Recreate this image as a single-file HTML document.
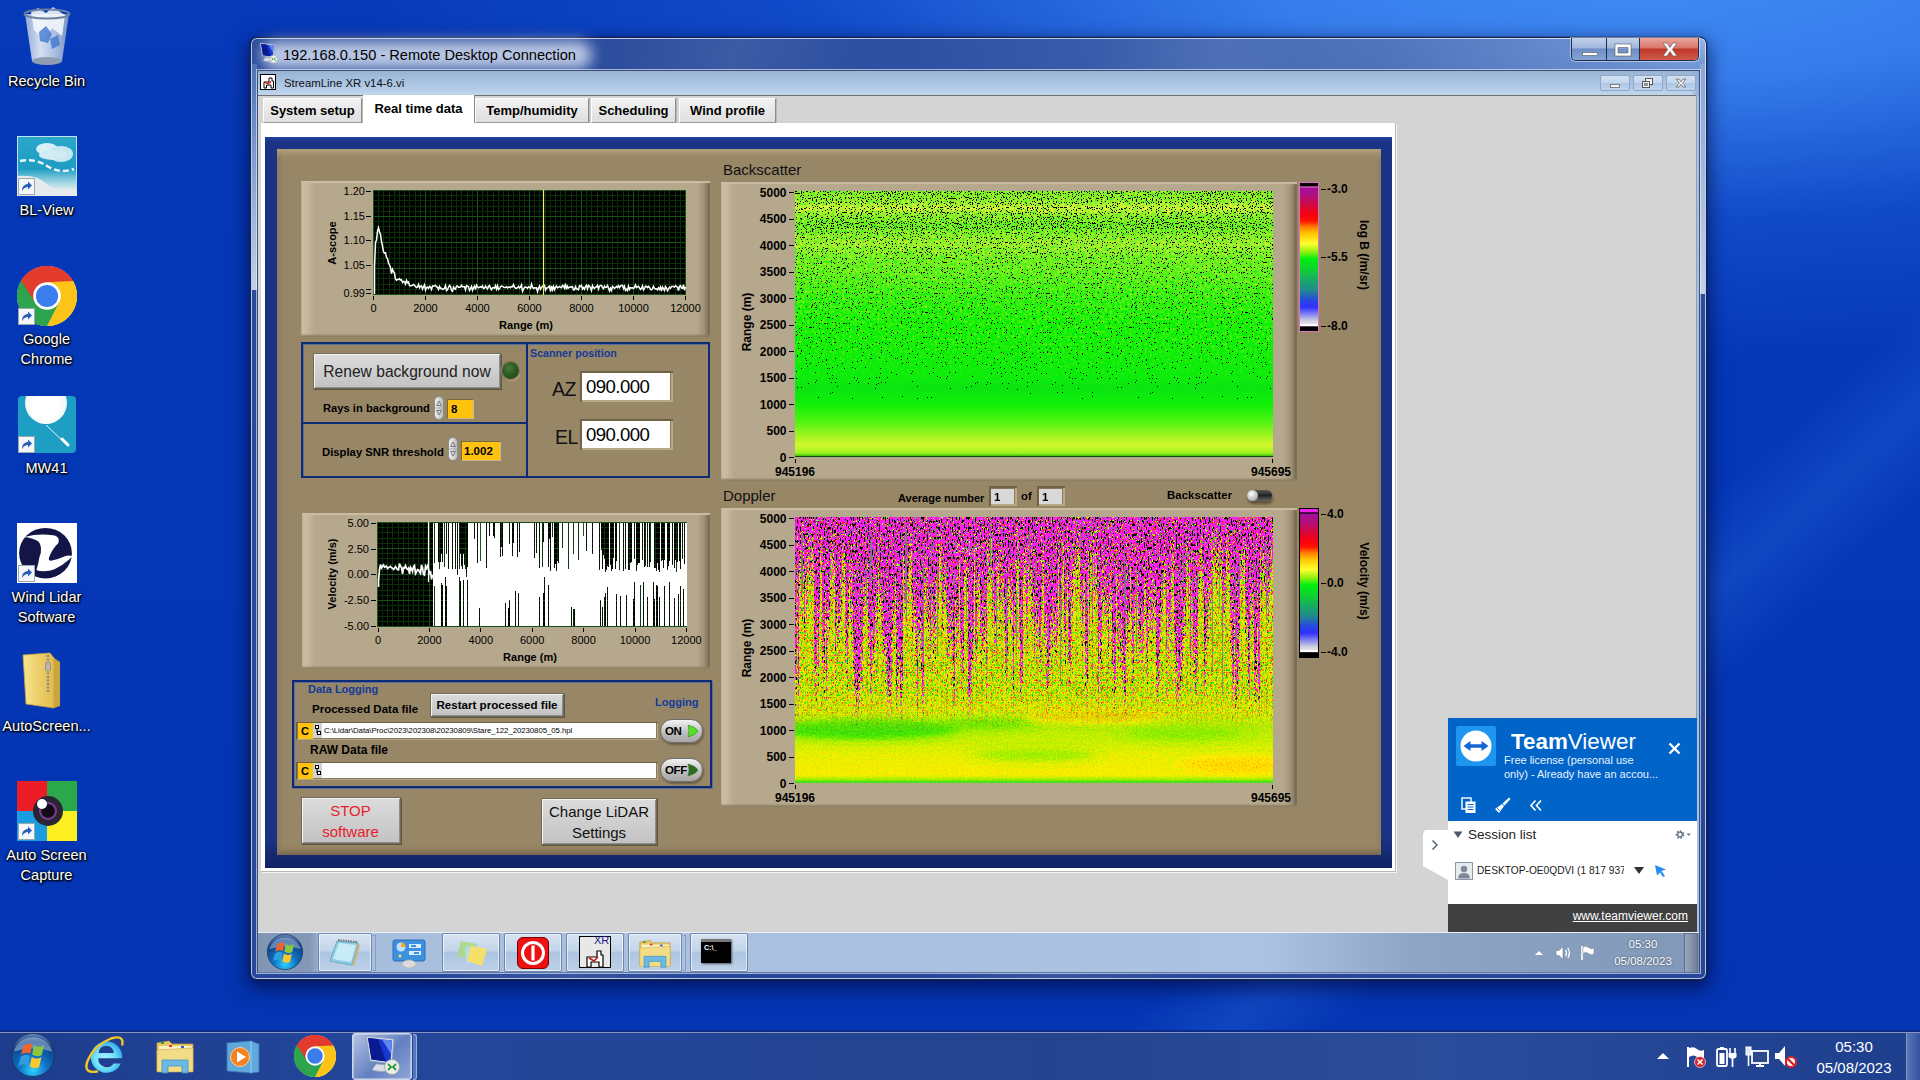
<!DOCTYPE html><html><head><meta charset="utf-8"><title>Desktop</title><style>
html,body{margin:0;padding:0}
body{width:1920px;height:1080px;overflow:hidden;position:relative;font-family:"Liberation Sans", "DejaVu Sans", sans-serif;
background:#0438b8;}
div{position:absolute;box-sizing:border-box}
svg{position:absolute;overflow:visible}
.t{white-space:nowrap;line-height:1.15}
.dl{color:#fff;text-shadow:0 1px 2px #000,0 0 3px #000,1px 1px 2px #000;font-size:14.6px;text-align:center;white-space:nowrap;line-height:20px}
.btn{background:linear-gradient(#dcdcdc,#c2c2c2);border:1px solid #6f6a5c;box-shadow:inset 1px 1px 0 #f4f4f4,inset -1px -1px 0 #8d8d8d,1px 1px 0 #5f563f;text-align:center}
.pnl{background:linear-gradient(to right,#cdc0a6 0px,#c7b99e 6px,#b6a88c 13px,#b6a88c calc(100% - 13px),#a09275 calc(100% - 6px),#80735a calc(100% - 2px),#62563f 100%);box-shadow:inset 0 2px 1px #cabda3,inset 0 -2px 2px #8d7f62}
.ax{font-size:11px;color:#000;white-space:nowrap;line-height:12px}
.axb{font-size:11px;font-weight:bold;color:#000;white-space:nowrap;line-height:12px}
</style></head><body>
<div style="left:0;top:0;width:1920px;height:1080px;background:radial-gradient(ellipse 1300px 400px at 1640px -40px, rgba(66,142,246,1) 0%, rgba(58,130,240,.92) 30%, rgba(28,92,216,.5) 65%, rgba(4,56,184,0) 100%),linear-gradient(138deg, rgba(60,130,240,0) 72.500%, rgba(60,130,240,.22) 76%, rgba(60,130,240,0) 79.500%),linear-gradient(to bottom,#0639b9 0%,#0437b6 40%,#0434b2 100%)"></div>
<svg style="left:22px;top:6px" width="50" height="62" viewBox="0 0 50 62"><defs><linearGradient id="rb" x1="0" x2="1"><stop offset="0" stop-color="#9fb4d6"/><stop offset=".35" stop-color="#e8eef8"/><stop offset=".7" stop-color="#b7c7e2"/><stop offset="1" stop-color="#7f96c0"/></linearGradient></defs><path d="M3 8 L47 8 L40 55 Q25 61 10 55 Z" fill="url(#rb)" opacity=".92"/><path d="M9 6 L16 2 L24 7 L31 1 L38 6 L43 9 L40 30 L30 22 L22 34 L12 24 Z" fill="#f2f5fb" opacity=".9"/><path d="M17 26 l7 -6 6 8 -4 9 -8 -2z M28 33 l8 -4 2 10 -8 4z" fill="#3f78d0" opacity=".8"/><ellipse cx="25" cy="8" rx="22.5" ry="4.5" fill="none" stroke="#6c7f9f" stroke-width="2"/><ellipse cx="25" cy="55" rx="15" ry="4" fill="#8e9cb4"/></svg>
<div class="dl" style="left:0;top:71px;width:93px">Recycle Bin</div>
<div style="left:17px;top:136px;width:60px;height:60px;background:linear-gradient(#2aa7c9 0%,#1e9cc2 55%,#8fd0e0 75%,#e8ecee 92%);border:1px solid #bfe3ee"></div>
<svg style="left:17px;top:136px" width="60" height="60" viewBox="0 0 60 60"><ellipse cx="30" cy="13" rx="11" ry="6" fill="#d9eff6"/><ellipse cx="44" cy="18" rx="12" ry="8" fill="#c6e7f1"/><ellipse cx="36" cy="19" rx="14" ry="5" fill="#d2ecf4"/><path d="M3 25 Q18 22 30 30 T57 33" stroke="#e8f6fa" stroke-width="2.4" stroke-dasharray="6 3" fill="none"/><path d="M0 40 Q20 38 30 48 T60 54 L60 60 L0 60Z" fill="#e6eaec"/></svg>
<svg style="left:18px;top:178px" width="17" height="17" viewBox="0 0 17 17"><rect x="0.5" y="0.5" width="16" height="16" fill="#f4f6fa" stroke="#9aa"/><path d="M4 13 C4 8 7 6 10 6 L10 3.5 L14 7.5 L10 11.5 L10 9 C7.5 9 6 10 4 13Z" fill="#2b5fb8"/></svg>
<div class="dl" style="left:0;top:200px;width:93px">BL-View</div>
<svg style="left:17px;top:266px" width="60" height="60" viewBox="-50 -50 100 100"><circle r="50" fill="#fff"/><path d="M0 0 L-43.3 -25 A50 50 0 0 1 43.3 -25 Z" fill="#e33b2e"/><path d="M0 0 L43.3 -25 A50 50 0 0 1 0 50 Z" fill="#fcc419"/><path d="M0 0 L0 50 A50 50 0 0 1 -43.3 -25 Z" fill="#2da44e"/><path d="M0 -23 L43.3 -25 A50 50 0 0 0 -43.3 -25 L-20 11 Z" fill="#e33b2e"/><path d="M20 11 L0 50 A50 50 0 0 0 43.3 -25 L0 -23 Z" fill="#fcc419"/><path d="M-20 11 L-43.3 -25 A50 50 0 0 0 0 50 L20 11 Z" fill="#2da44e"/><circle r="23" fill="#fff"/><circle r="18.5" fill="#3b7ded"/></svg>
<svg style="left:18px;top:308px" width="17" height="17" viewBox="0 0 17 17"><rect x="0.5" y="0.5" width="16" height="16" fill="#f4f6fa" stroke="#9aa"/><path d="M4 13 C4 8 7 6 10 6 L10 3.5 L14 7.5 L10 11.5 L10 9 C7.5 9 6 10 4 13Z" fill="#2b5fb8"/></svg>
<div class="dl" style="left:0;top:329px;width:93px">Google<br>Chrome</div>
<div style="left:18px;top:396px;width:58px;height:57px;border-radius:4px;background:#1f9ec4;overflow:hidden"><div style="left:7px;top:-14px;width:42px;height:42px;border-radius:50%;background:radial-gradient(circle at 50% 60%,#fff 40%,#d8e6ea 100%)"></div><svg width="58" height="57" viewBox="0 0 58 57"><path d="M28 29 L46 46" stroke="#e8f4f8" stroke-width="1"/><path d="M44 43 L50 49" stroke="#fff" stroke-width="3" stroke-linecap="round"/></svg></div>
<svg style="left:18px;top:436px" width="17" height="17" viewBox="0 0 17 17"><rect x="0.5" y="0.5" width="16" height="16" fill="#f4f6fa" stroke="#9aa"/><path d="M4 13 C4 8 7 6 10 6 L10 3.5 L14 7.5 L10 11.5 L10 9 C7.5 9 6 10 4 13Z" fill="#2b5fb8"/></svg>
<div class="dl" style="left:0;top:458px;width:93px">MW41</div>
<div style="left:17px;top:523px;width:60px;height:60px;background:#fff;overflow:hidden"><svg width="60" height="60" viewBox="0 0 60 60"><ellipse cx="28.500" cy="30.200" rx="26.400" ry="25.300" fill="#131547"/><path d="M7.300 13.900 Q22 10 36.100 12.200 Q41 13 41.700 16.300 Q42 19 41 20.500 Q35 26 31.900 35.100 Q31.500 38 34 37.800 Q42 36 48.600 33 Q52 32 55.500 33.200 Q53.500 35 52.100 36.500 Q45 43 37.500 46.200 Q32 48.500 26.400 48.300 Q22 48 19.400 46.900 Q21.500 41 22.200 35.100 Q24.500 29 24 24.700 Q23.500 20.500 21.500 18.400 Q15 14.500 7.300 13.900Z" fill="#fff"/></svg></div>
<svg style="left:18px;top:565px" width="17" height="17" viewBox="0 0 17 17"><rect x="0.5" y="0.5" width="16" height="16" fill="#f4f6fa" stroke="#9aa"/><path d="M4 13 C4 8 7 6 10 6 L10 3.5 L14 7.5 L10 11.5 L10 9 C7.5 9 6 10 4 13Z" fill="#2b5fb8"/></svg>
<div class="dl" style="left:0;top:587px;width:93px">Wind Lidar<br>Software</div>
<svg style="left:20px;top:652px" width="46" height="58" viewBox="0 0 46 58"><defs><linearGradient id="zf" x1="0" x2="1"><stop offset="0" stop-color="#f7e38d"/><stop offset="1" stop-color="#e2bb4a"/></linearGradient></defs><path d="M3 3 L30 1 L34 6 L34 56 L6 52 Z" fill="url(#zf)" stroke="#c9a53f" stroke-width=".8"/><path d="M34 6 L40 10 L40 54 L34 56Z" fill="#c9a53f"/><path d="M28 3 V40" stroke="#8c8c8c" stroke-width="2.5" stroke-dasharray="2 1.5"/><rect x="25.5" y="10" width="5" height="9" rx="2" fill="#b5b5b5" stroke="#777" stroke-width=".6"/></svg>
<div class="dl" style="left:0;top:716px;width:93px">AutoScreen...</div>
<div style="left:17px;top:781px;width:60px;height:60px;background:conic-gradient(#2aa84a 0 25%,#fdee21 0 50%,#1b9be0 0 75%,#ec1c24 0)"></div>
<div style="left:33px;top:796px;width:30px;height:30px;border-radius:50%;background:radial-gradient(circle at 50% 50%,#120a18 0 30%,#7a3a8a 34% 40%,#2b2433 44% 70%,#1b3f8f 74% 100%)"></div><div style="left:37px;top:799px;width:10px;height:10px;border-radius:50%;background:#fff"></div>
<svg style="left:18px;top:823px" width="17" height="17" viewBox="0 0 17 17"><rect x="0.5" y="0.5" width="16" height="16" fill="#f4f6fa" stroke="#9aa"/><path d="M4 13 C4 8 7 6 10 6 L10 3.5 L14 7.5 L10 11.5 L10 9 C7.5 9 6 10 4 13Z" fill="#2b5fb8"/></svg>
<div class="dl" style="left:0;top:845px;width:93px">Auto Screen<br>Capture</div>
<div style="left:0;top:1032px;width:1920px;height:48px;background:linear-gradient(to right,#1d3c8c 0%,#24469a 20%,#24448f 55%,#2b4c9a 75%,#1e3f8e 100%);border-top:1px solid #8696c4;box-shadow:0 -2px 0 #0b2c86"></div>
<svg style="left:11px;top:1033px" width="44" height="44" viewBox="-50 -50 100 100"><defs><radialGradient id="og33" cx=".5" cy=".85" r=".9"><stop offset="0" stop-color="#2fd2ff"/><stop offset=".35" stop-color="#1173c4"/><stop offset=".75" stop-color="#0d3f86"/><stop offset="1" stop-color="#86a6cc"/></radialGradient></defs><circle r="49" fill="url(#og33)" stroke="#1b355f" stroke-width="2"/><path d="M-44 -8 A46 46 0 0 1 44 -8 Q0 -22 -44 -8Z" fill="#fff" opacity=".35"/><path d="M-22 -20 Q-10 -30 -2 -24 L-6 -3 Q-16 -8 -27 -1Z" fill="#f0642a"/><path d="M2 -22 Q12 -14 25 -22 L20 0 Q10 6 -2 -1Z" fill="#8cc63f"/><path d="M-28 4 Q-16 -4 -7 2 L-11 24 Q-22 18 -33 25Z" fill="#2f9de0"/><path d="M-3 4 Q8 12 19 5 L14 27 Q4 33 -7 26Z" fill="#fcc82d"/></svg>
<svg style="left:75px;top:1030px" width="60" height="50" viewBox="0 0 60 50"><defs><radialGradient id="ieg" cx=".45" cy=".55" r=".6"><stop offset="0" stop-color="#a8f4ff"/><stop offset=".55" stop-color="#6fe0fb"/><stop offset="1" stop-color="#2aa2e6"/></radialGradient></defs><path fill-rule="evenodd" d="M47.2 28.2 H23.4 A8.3 8.3 0 0 0 38.6 33.4 L45.9 33.4 A15.7 15.7 0 1 1 47.2 28.2 Z M23.6 23.1 A7.6 7.4 0 0 1 38.900 23.1 Z" fill="url(#ieg)"/><path d="M22 41.5 Q8 44 12.500 31 Q19 15 36 8.500 Q49 4.500 47.300 14.500" fill="none" stroke="#f3c623" stroke-width="2.400" stroke-linecap="round"/></svg>
<svg style="left:155px;top:1036px" width="40" height="40" viewBox="0 0 40 38"><path d="M2 6 L14 4 L17 7 L38 7 L38 34 L2 34Z" fill="#e9c868" stroke="#c19a36" stroke-width=".8"/><rect x="4" y="9" width="33" height="22" fill="#fbf1c0"/><path d="M2 13 L38 11 L38 35 L2 35Z" fill="#f3dc86" stroke="#c8a545" stroke-width=".6"/><path d="M7 23 H33 V36 H27 V29 H13 V36 H7Z" fill="#64b8ea" stroke="#3c8fc7" stroke-width=".8" opacity=".95"/><rect x="6" y="5" width="3" height="2" fill="#3a9a3a"/><rect x="14" y="8" width="3" height="2" fill="#d33"/><rect x="26" y="9" width="3" height="2" fill="#36c"/></svg>
<svg style="left:225px;top:1040px" width="36" height="34" viewBox="0 0 36 34"><path d="M2 3 L26 1 L34 4 L34 32 L26 33 L2 31Z" fill="#5fa8dc" stroke="#3478b4" stroke-width=".8"/><path d="M26 1 V33" stroke="#9dd0f0" stroke-width="1"/><circle cx="15" cy="17" r="9.5" fill="#f58220" stroke="#fbd0a0" stroke-width="1"/><path d="M12 11.5 L21 17 L12 22.5Z" fill="#fff"/></svg>
<svg style="left:294px;top:1035px" width="42" height="42" viewBox="-50 -50 100 100"><circle r="50" fill="#fff"/><path d="M0 0 L-43.3 -25 A50 50 0 0 1 43.3 -25 Z" fill="#e33b2e"/><path d="M0 0 L43.3 -25 A50 50 0 0 1 0 50 Z" fill="#fcc419"/><path d="M0 0 L0 50 A50 50 0 0 1 -43.3 -25 Z" fill="#2da44e"/><path d="M0 -23 L43.3 -25 A50 50 0 0 0 -43.3 -25 L-20 11 Z" fill="#e33b2e"/><path d="M20 11 L0 50 A50 50 0 0 0 43.3 -25 L0 -23 Z" fill="#fcc419"/><path d="M-20 11 L-43.3 -25 A50 50 0 0 0 0 50 L20 11 Z" fill="#2da44e"/><circle r="23" fill="#fff"/><circle r="18.5" fill="#3b7ded"/></svg>
<div style="left:352px;top:1033px;width:60px;height:47px;border:1px solid #c9d6ee;border-radius:3px;background:linear-gradient(135deg,rgba(230,238,252,.75),rgba(150,175,225,.55) 55%,rgba(190,208,240,.7));box-shadow:inset 0 0 0 1px rgba(255,255,255,.35)"></div>
<div style="left:413px;top:1034px;width:4px;height:46px;border:1px solid #9db0d8;border-left:none;border-radius:0 3px 3px 0;background:rgba(150,175,225,.45)"></div>
<svg style="left:362px;top:1034px" width="40.0" height="42.0" viewBox="0 0 40 42"><path d="M4 2 L32 5 L30 30 L8 27Z" fill="#cfd8e6" stroke="#8e9ab0" stroke-width=".8"/><path d="M6 4 L30 6.5 L28.5 28 L9.5 25.5Z" fill="#1a35d0"/><path d="M6 4 L16 5 L24 27.4 L9.5 25.5Z" fill="#0a1a90"/><path d="M20 5.5 L30 6.5 L29 20Z" fill="#5d86ee"/><path d="M14 30 L26 31 L28 36 Q20 39 10 36Z" fill="#d9dde4" stroke="#9aa2b0" stroke-width=".6"/><circle cx="30" cy="33" r="7.5" fill="#e9ece9" stroke="#9aa59a" stroke-width=".8"/><path d="M26 30 L29 33 L26 36 M34 30 L31 33 L34 36" stroke="#2a9a3a" stroke-width="1.8" fill="none"/></svg>
<svg style="left:1655px;top:1050px" width="16" height="12" viewBox="0 0 16 12"><path d="M2 9 L8 3 L14 9Z" fill="#fff"/></svg>
<svg style="left:1684px;top:1044px" width="26" height="26" viewBox="0 0 26 26"><path d="M4 3 V23" stroke="#fff" stroke-width="2"/><path d="M5 4 Q10 2 13 5 T20 6 L20 14 Q16 16 13 13 T5 13Z" fill="#fff"/><circle cx="16" cy="18" r="5.5" fill="#d8232a" stroke="#fff" stroke-width=".6"/><path d="M13.5 15.5 L18.5 20.5 M18.5 15.5 L13.5 20.5" stroke="#fff" stroke-width="1.6"/></svg>
<svg style="left:1714px;top:1044px" width="26" height="26" viewBox="0 0 26 26"><rect x="3" y="5" width="10" height="17" rx="1.5" fill="none" stroke="#fff" stroke-width="1.8"/><rect x="6" y="3" width="4" height="2" fill="#fff"/><rect x="5.5" y="9" width="5" height="11" fill="#fff"/><path d="M16 4 V9 M21 4 V9" stroke="#fff" stroke-width="1.6"/><path d="M14.5 9 H22.5 V13 Q18.5 17 14.5 13Z" fill="#fff"/><path d="M18.5 15 V23" stroke="#fff" stroke-width="1.8"/></svg>
<svg style="left:1743px;top:1044px" width="28" height="26" viewBox="0 0 28 26"><rect x="9" y="7" width="16" height="12" fill="#2c4a8c" stroke="#fff" stroke-width="1.8"/><path d="M13 22 H21 M17 19 V22" stroke="#fff" stroke-width="1.8"/><rect x="3" y="3" width="5" height="8" fill="#dfe6f2" stroke="#fff" stroke-width="1"/><path d="M5.5 11 V22" stroke="#fff" stroke-width="1.6"/></svg>
<svg style="left:1772px;top:1042px" width="28" height="28" viewBox="0 0 28 28"><path d="M3 11 H7 L13 4 V24 L7 17 H3Z" fill="#fff"/><circle cx="19" cy="20" r="5" fill="#fff" stroke="#d8232a" stroke-width="2.2"/><path d="M15.6 16.6 L22.4 23.4" stroke="#d8232a" stroke-width="2.2"/></svg>
<div class="t" style="left:1800px;top:1037px;font-size:15px;color:#fff;width:108px;text-align:center;line-height:20px;">05:30</div>
<div class="t" style="left:1800px;top:1058px;font-size:15px;color:#fff;width:108px;text-align:center;line-height:20px;">05/08/2023</div>
<div style="left:1906px;top:1033px;width:14px;height:47px;border-left:1px solid #7f96c8;background:linear-gradient(to right,rgba(160,185,230,.45),rgba(90,120,190,.35))"></div>
<div style="left:250px;top:37px;width:1457px;height:943px;border-radius:7px;border:1px solid #14244a;box-shadow:0 0 0 1px rgba(10,20,60,.25),0 6px 18px 3px rgba(0,0,40,.55),inset 0 0 0 1px rgba(235,242,255,.75);background:linear-gradient(100deg,rgba(255,255,255,0) 20%,rgba(255,255,255,.08) 30%,rgba(255,255,255,0) 38%,rgba(255,255,255,0) 52%,rgba(255,255,255,.08) 60%,rgba(255,255,255,0) 70%),radial-gradient(ellipse 1050px 300px at 100% 0%,rgba(150,180,228,1) 0%,rgba(112,148,212,.9) 12%,rgba(84,124,196,.6) 40%,rgba(60,100,180,.25) 75%,rgba(40,72,154,0) 100%),linear-gradient(#2a4b9c,#26479a)"></div>
<div style="left:252px;top:64px;width:5px;height:226px;background:linear-gradient(#4a70b6,#7d9bd0 40%,#c2cfe8)"></div>
<div style="left:1700px;top:64px;width:5px;height:230px;background:linear-gradient(#8aa6d8,#9db5de 40%,#c4d0e8)"></div>
<div style="left:262px;top:41px;width:330px;height:28px;border-radius:14px;background:rgba(228,236,250,.78);filter:blur(7px)"></div>
<svg style="left:258px;top:42px" width="20.8" height="21.84" viewBox="0 0 40 42"><path d="M4 2 L32 5 L30 30 L8 27Z" fill="#cfd8e6" stroke="#8e9ab0" stroke-width=".8"/><path d="M6 4 L30 6.5 L28.5 28 L9.5 25.5Z" fill="#1a35d0"/><path d="M6 4 L16 5 L24 27.4 L9.5 25.5Z" fill="#0a1a90"/><path d="M20 5.5 L30 6.5 L29 20Z" fill="#5d86ee"/><path d="M14 30 L26 31 L28 36 Q20 39 10 36Z" fill="#d9dde4" stroke="#9aa2b0" stroke-width=".6"/><circle cx="30" cy="33" r="7.5" fill="#e9ece9" stroke="#9aa59a" stroke-width=".8"/><path d="M26 30 L29 33 L26 36 M34 30 L31 33 L34 36" stroke="#2a9a3a" stroke-width="1.8" fill="none"/></svg>
<div class="t" style="left:283px;top:44px;font-size:14.6px;color:#000;line-height:22px;">192.168.0.150 - Remote Desktop Connection</div>
<div style="left:1571px;top:38px;width:128px;height:23px;border:1px solid #1d2e55;border-top:none;border-radius:0 0 5px 5px;overflow:hidden;box-shadow:0 0 0 1px rgba(255,255,255,.45)"><div style="left:0;top:0;width:35px;height:22px;background:linear-gradient(#c3d2ea 0%,#9fb6dc 45%,#6d8ec6 50%,#86a3d2 100%);border-right:1px solid #1d2e55"></div><div style="left:35px;top:0;width:33px;height:22px;background:linear-gradient(#c3d2ea 0%,#9fb6dc 45%,#6d8ec6 50%,#86a3d2 100%);border-right:1px solid #1d2e55"></div><div style="left:68px;top:0;width:60px;height:22px;background:linear-gradient(#eaa59c 0%,#d9776b 45%,#c0392b 50%,#cf5a48 100%)"></div><svg style="left:0;top:0" width="128" height="22" viewBox="0 0 128 22"><rect x="10.5" y="14.5" width="15" height="3" fill="#fff" stroke="#555" stroke-width=".6"/><path d="M43 6 H59 V18 H43Z M46 9.5 V15 H56 V9.5Z" fill="#fff" fill-rule="evenodd" stroke="#555" stroke-width=".6"/><path d="M91 5 L95 5 L98 9.5 L101 5 L105 5 L100.3 11.5 L105 18 L101 18 L98 13.5 L95 18 L91 18 L95.7 11.5Z" fill="#fff" stroke="#555" stroke-width=".6"/></svg></div>
<div style="left:257px;top:70px;width:1443px;height:903px;border:1px solid #3c4f78;background:#d4d4d4;box-shadow:0 0 0 1px rgba(240,245,255,.6)"></div>
<div style="left:258px;top:71px;width:1441px;height:25px;background:linear-gradient(#98b2d2 0%,#a3bddd 30%,#b0c9e6 65%,#c1d6ee 100%);border-bottom:1px solid #707070"></div>
<div style="left:1696px;top:95px;width:3px;height:837px;background:#a9c1e1;border-left:1px solid #8f9fb5"></div>
<div style="left:1690px;top:71px;width:9px;height:24px;background:linear-gradient(to right,rgba(147,174,220,0),#8facd9)"></div>
<svg style="left:260px;top:74px" width="16" height="16" viewBox="0 0 16 16"><rect x=".5" y=".5" width="15" height="15" fill="#fff" stroke="#000"/><path d="M9 4 H12 V7 H13.5 V14 H11 V11 H6.5 V14 H4 V8 H9Z" fill="none" stroke="#000" stroke-width="1"/><path d="M4.5 8 L8 10 L11 7.5" stroke="#e11" stroke-width="1.2" fill="none"/></svg>
<div class="t" style="left:284px;top:75.5px;font-size:11.4px;color:#111;line-height:15px;">StreamLine XR v14-6.vi</div>
<div style="left:1600px;top:75px;width:30px;height:16px;border:1px solid #8fa6c6;border-radius:2px;background:linear-gradient(#d3e1f2 0%,#c3d6ee 48%,#aec6e4 52%,#c0d4ec 100%)"></div>
<div style="left:1633px;top:75px;width:30px;height:16px;border:1px solid #8fa6c6;border-radius:2px;background:linear-gradient(#d3e1f2 0%,#c3d6ee 48%,#aec6e4 52%,#c0d4ec 100%)"></div>
<div style="left:1666px;top:75px;width:30px;height:16px;border:1px solid #8fa6c6;border-radius:2px;background:linear-gradient(#d3e1f2 0%,#c3d6ee 48%,#aec6e4 52%,#c0d4ec 100%)"></div>
<svg style="left:1600px;top:75px" width="96" height="16" viewBox="0 0 96 16"><rect x="10.5" y="9.5" width="9" height="3" fill="#f4f4f4" stroke="#666" stroke-width=".8"/><rect x="45.500" y="3.5" width="7" height="6" fill="#f4f4f4" stroke="#555" stroke-width="1"/><rect x="42.500" y="6.5" width="7" height="6" fill="#f4f4f4" stroke="#555" stroke-width="1"/><rect x="44.500" y="8.500" width="3" height="2" fill="#9ab" stroke="#555" stroke-width=".6"/><path d="M76 4 L79 4 L81 6.7 L83 4 L86 4 L82.600 8 L86 12 L83 12 L81 9.300 L79 12 L76 12 L79.400 8Z" fill="#f4f4f4" stroke="#666" stroke-width=".8"/></svg>
<div style="left:263px;top:98px;width:99px;height:25px;background:linear-gradient(#f2f2f2,#dedede);border:1px solid #fdfdfd;border-right-color:#8c8c8c;border-bottom:1px solid #9a9a9a;box-shadow:1px 0 0 #b9b9b9"></div><div class="t" style="left:263px;top:103px;font-size:13px;color:#000;font-weight:bold;width:99px;text-align:center;line-height:16px;">System setup</div>
<div style="left:475px;top:98px;width:114px;height:25px;background:linear-gradient(#f2f2f2,#dedede);border:1px solid #fdfdfd;border-right-color:#8c8c8c;border-bottom:1px solid #9a9a9a;box-shadow:1px 0 0 #b9b9b9"></div><div class="t" style="left:475px;top:103px;font-size:13px;color:#000;font-weight:bold;width:114px;text-align:center;line-height:16px;">Temp/humidity</div>
<div style="left:591px;top:98px;width:85px;height:25px;background:linear-gradient(#f2f2f2,#dedede);border:1px solid #fdfdfd;border-right-color:#8c8c8c;border-bottom:1px solid #9a9a9a;box-shadow:1px 0 0 #b9b9b9"></div><div class="t" style="left:591px;top:103px;font-size:13px;color:#000;font-weight:bold;width:85px;text-align:center;line-height:16px;">Scheduling</div>
<div style="left:679px;top:98px;width:97px;height:25px;background:linear-gradient(#f2f2f2,#dedede);border:1px solid #fdfdfd;border-right-color:#8c8c8c;border-bottom:1px solid #9a9a9a;box-shadow:1px 0 0 #b9b9b9"></div><div class="t" style="left:679px;top:103px;font-size:13px;color:#000;font-weight:bold;width:97px;text-align:center;line-height:16px;">Wind profile</div>
<div style="left:261px;top:123px;width:1135px;height:749px;background:#fff;border-right:1px solid #b5b5b5;border-bottom:1px solid #b5b5b5;box-shadow:1px 1px 0 #f4f4f4"></div>
<div style="left:363px;top:95px;width:111px;height:28px;background:#fff;border:1px solid #fff;border-bottom:none;box-shadow:1px 0 0 #8a8a8a"></div><div class="t" style="left:363px;top:101px;font-size:13px;color:#000;font-weight:bold;width:111px;text-align:center;line-height:16px;">Real time data</div>
<div style="left:265px;top:137px;width:1127px;height:731px;background:linear-gradient(#23409a 0px,#1b3384 6px,#1b3384 700px,#152a72 716px,#0f2266 731px)"></div>
<div style="left:277px;top:149px;width:1104px;height:706px;background:#988767;box-shadow:inset 0 6px 6px -2px #b5a17c,inset 0 -6px 6px -3px #6f6148,inset 5px 0 5px -3px #857557,inset -4px 0 4px -3px #857557"></div>
<div class="pnl" style="left:301px;top:181px;width:409px;height:156px"></div>
<svg style="left:373px;top:190px" width="313" height="105" viewBox="0 0 313 105"><rect width="313" height="105" fill="#000"/><path d="M5.5 0V105M10.5 0V105M16.5 0V105M21.5 0V105M26.5 0V105M31.5 0V105M36.5 0V105M42.5 0V105M47.5 0V105M57.5 0V105M62.5 0V105M68.5 0V105M73.5 0V105M78.5 0V105M83.5 0V105M88.5 0V105M94.5 0V105M99.5 0V105M109.5 0V105M114.5 0V105M120.5 0V105M125.5 0V105M130.5 0V105M135.5 0V105M140.5 0V105M146.5 0V105M151.5 0V105M161.5 0V105M166.5 0V105M172.5 0V105M177.5 0V105M182.5 0V105M187.5 0V105M192.5 0V105M198.5 0V105M203.5 0V105M213.5 0V105M218.5 0V105M224.5 0V105M229.5 0V105M234.5 0V105M239.5 0V105M244.5 0V105M250.5 0V105M255.5 0V105M265.5 0V105M270.5 0V105M276.5 0V105M281.5 0V105M286.5 0V105M291.5 0V105M296.5 0V105M302.5 0V105M307.5 0V105M0 5.5H313M0 10.5H313M0 16.5H313M0 21.5H313M0 31.5H313M0 36.5H313M0 42.5H313M0 47.5H313M0 57.5H313M0 62.5H313M0 68.5H313M0 73.5H313M0 83.5H313M0 88.5H313M0 94.5H313M0 99.5H313" stroke="#0a300a" stroke-width="1" fill="none"/><path d="M0.5 0V105M52.5 0V105M104.5 0V105M156.5 0V105M208.5 0V105M260.5 0V105M312.5 0V105M0 0.5H313M0 26.5H313M0 52.5H313M0 78.5H313M0 104.5H313" stroke="#175217" stroke-width="1" fill="none"/><polyline points="1.5,104.0 1.5,77.0 2.5,52.5 3.5,50.0 4.5,41.2 5.5,37.8 6.5,41.7 7.5,44.4 8.5,51.5 9.5,56.0 10.5,61.7 11.5,63.1 12.5,62.7 13.5,67.5 14.5,68.6 15.5,73.1 16.5,75.0 17.5,77.5 18.5,83.6 19.5,79.4 20.5,81.7 21.5,83.1 22.5,89.1 23.5,90.2 24.5,89.4 25.5,89.4 26.5,88.7 27.5,90.2 28.5,89.8 29.5,92.6 30.5,91.4 31.5,91.8 32.5,94.2 33.5,90.3 34.5,92.8 35.5,92.0 36.5,95.5 37.5,96.0 38.5,95.6 39.5,95.4 40.5,94.4 41.5,95.2 42.5,96.6 43.5,97.6 44.5,97.0 45.5,94.3 46.5,97.7 47.5,96.1 48.5,95.9 49.5,99.1 50.5,96.7 51.5,94.8 52.5,100.1 53.5,97.5 54.5,97.2 55.5,98.4 56.5,96.4 57.5,97.3 58.5,99.5 59.5,96.0 60.5,96.3 61.5,95.9 62.5,95.2 63.5,96.8 64.5,97.2 65.5,99.4 66.5,96.5 67.5,98.4 68.5,98.2 69.5,99.4 70.5,99.0 71.5,98.3 72.5,95.6 73.5,100.6 74.5,99.7 75.5,97.2 76.5,95.4 77.5,96.7 78.5,100.4 79.5,101.3 80.5,97.0 81.5,98.7 82.5,99.2 83.5,96.1 84.5,96.0 85.5,97.4 86.5,97.2 87.5,97.0 88.5,95.2 89.5,96.7 90.5,96.8 91.5,96.8 92.5,99.9 93.5,95.7 94.5,96.2 95.5,96.8 96.5,100.5 97.5,98.6 98.5,96.4 99.5,100.3 100.5,97.9 101.5,96.1 102.5,99.6 103.5,95.2 104.5,96.8 105.5,97.8 106.5,97.1 107.5,96.7 108.5,97.4 109.5,95.9 110.5,98.6 111.5,98.2 112.5,96.1 113.5,97.6 114.5,98.9 115.5,96.2 116.5,95.5 117.5,98.3 118.5,99.7 119.5,97.8 120.5,97.8 121.5,98.1 122.5,95.6 123.5,99.1 124.5,95.8 125.5,99.5 126.5,98.8 127.5,96.7 128.5,96.0 129.5,96.4 130.5,97.1 131.5,97.4 132.5,97.4 133.5,96.8 134.5,97.9 135.5,97.2 136.5,96.8 137.5,97.6 138.5,96.5 139.5,96.8 140.5,94.7 141.5,97.1 142.5,98.3 143.5,98.2 144.5,97.6 145.5,96.3 146.5,98.1 147.5,97.1 148.5,94.9 149.5,101.4 150.5,99.3 151.5,97.3 152.5,97.0 153.5,97.3 154.5,98.3 155.5,96.7 156.5,97.2 157.5,98.4 158.5,94.0 159.5,97.1 160.5,98.4 161.5,97.8 162.5,98.0 163.5,97.7 164.5,101.6 165.5,98.3 166.5,96.1 167.5,99.3 168.5,97.7 169.5,96.2 170.5,96.4 171.5,95.4 172.5,100.1 173.5,98.1 174.5,98.1 175.5,96.7 176.5,96.0 177.5,101.6 178.5,96.0 179.5,99.8 180.5,96.6 181.5,99.8 182.5,97.4 183.5,95.9 184.5,97.8 185.5,97.3 186.5,96.5 187.5,97.4 188.5,97.8 189.5,95.4 190.5,96.1 191.5,98.1 192.5,93.6 193.5,99.3 194.5,96.3 195.5,98.0 196.5,97.4 197.5,96.6 198.5,97.3 199.5,96.7 200.5,99.9 201.5,99.8 202.5,96.7 203.5,99.0 204.5,99.1 205.5,99.8 206.5,95.8 207.5,96.5 208.5,95.5 209.5,99.0 210.5,97.6 211.5,99.3 212.5,96.5 213.5,95.3 214.5,98.9 215.5,95.3 216.5,96.2 217.5,97.9 218.5,100.5 219.5,95.6 220.5,97.8 221.5,98.5 222.5,97.0 223.5,97.0 224.5,95.4 225.5,99.1 226.5,96.0 227.5,95.4 228.5,95.5 229.5,97.9 230.5,98.7 231.5,96.1 232.5,97.5 233.5,97.4 234.5,95.5 235.5,98.0 236.5,101.0 237.5,98.2 238.5,100.4 239.5,96.4 240.5,97.2 241.5,98.5 242.5,97.6 243.5,96.4 244.5,97.5 245.5,95.7 246.5,97.7 247.5,96.1 248.5,95.4 249.5,95.3 250.5,98.6 251.5,96.3 252.5,100.4 253.5,99.2 254.5,100.5 255.5,96.1 256.5,99.4 257.5,97.6 258.5,97.9 259.5,97.7 260.5,98.5 261.5,97.3 262.5,95.0 263.5,97.6 264.5,96.8 265.5,96.2 266.5,97.9 267.5,99.5 268.5,98.4 269.5,96.0 270.5,100.0 271.5,98.5 272.5,96.1 273.5,96.5 274.5,97.6 275.5,96.4 276.5,97.4 277.5,99.4 278.5,99.9 279.5,98.6 280.5,96.3 281.5,98.5 282.5,99.0 283.5,98.8 284.5,99.9 285.5,97.8 286.5,99.4 287.5,97.1 288.5,101.1 289.5,97.1 290.5,98.6 291.5,100.5 292.5,96.6 293.5,98.0 294.5,100.9 295.5,98.9 296.5,97.2 297.5,98.3 298.5,96.5 299.5,96.5 300.5,96.6 301.5,97.1 302.5,95.7 303.5,96.7 304.5,97.0 305.5,100.7 306.5,96.3 307.5,95.7 308.5,98.1 309.5,98.3 310.5,94.8 311.5,100.2 312.5,96.9" fill="none" stroke="#fff" stroke-width="1.5"/><path d="M170.5 0V105" stroke="#f0f060" stroke-width="1.2"/></svg>
<div class="ax" style="left:338px;top:185px;width:27px;text-align:right">1.20</div>
<div style="left:366px;top:191px;width:5px;height:1px;background:#000"></div>
<div class="ax" style="left:338px;top:209.5px;width:27px;text-align:right">1.15</div>
<div style="left:366px;top:215.5px;width:5px;height:1px;background:#000"></div>
<div class="ax" style="left:338px;top:234px;width:27px;text-align:right">1.10</div>
<div style="left:366px;top:240px;width:5px;height:1px;background:#000"></div>
<div class="ax" style="left:338px;top:258.5px;width:27px;text-align:right">1.05</div>
<div style="left:366px;top:264.5px;width:5px;height:1px;background:#000"></div>
<div class="ax" style="left:338px;top:287px;width:27px;text-align:right">0.99</div>
<div style="left:366px;top:293px;width:5px;height:1px;background:#000"></div>
<div style="left:366px;top:289px;width:5px;height:1px;background:#000"></div>
<div style="left:373.0px;top:296px;width:1px;height:4px;background:#000"></div>
<div class="ax" style="left:348.5px;top:302px;width:50px;text-align:center">0</div>
<div style="left:425.0px;top:296px;width:1px;height:4px;background:#000"></div>
<div class="ax" style="left:400.5px;top:302px;width:50px;text-align:center">2000</div>
<div style="left:477.0px;top:296px;width:1px;height:4px;background:#000"></div>
<div class="ax" style="left:452.5px;top:302px;width:50px;text-align:center">4000</div>
<div style="left:529.0px;top:296px;width:1px;height:4px;background:#000"></div>
<div class="ax" style="left:504.5px;top:302px;width:50px;text-align:center">6000</div>
<div style="left:581.0px;top:296px;width:1px;height:4px;background:#000"></div>
<div class="ax" style="left:556.5px;top:302px;width:50px;text-align:center">8000</div>
<div style="left:633.0px;top:296px;width:1px;height:4px;background:#000"></div>
<div class="ax" style="left:608.5px;top:302px;width:50px;text-align:center">10000</div>
<div style="left:685.0px;top:296px;width:1px;height:4px;background:#000"></div>
<div class="ax" style="left:660.5px;top:302px;width:50px;text-align:center">12000</div>
<div class="axb" style="left:476px;top:319px;width:100px;text-align:center">Range (m)</div>
<div class="axb" style="left:282px;top:237px;width:100px;text-align:center;transform:rotate(-90deg)">A-scope</div>
<div style="left:301px;top:342px;width:409px;height:136px;border:2px solid #0d2a76;box-shadow:inset 1px 1px 0 #5f6d96"></div>
<div style="left:526px;top:342px;width:2px;height:136px;background:#0d2a76"></div>
<div style="left:301px;top:422px;width:226px;height:2px;background:#0d2a76"></div>
<div class="btn" style="left:313px;top:353px;width:188px;height:36px"></div>
<div class="t" style="left:313px;top:362px;font-size:15.6px;color:#222;width:188px;text-align:center;line-height:20px;">Renew background now</div>
<div style="left:502px;top:362px;width:17px;height:17px;border-radius:50%;background:radial-gradient(circle at 40% 35%,#4a7a3a 0%,#2c5a22 45%,#1c3c16 100%);box-shadow:0 0 0 1.5px #8b7c5c,1px 2px 1px #c9bb98"></div>
<div class="t" style="left:323px;top:401px;font-size:11.2px;color:#000;font-weight:bold;line-height:14px;">Rays in background</div>
<div style="left:434px;top:396px;width:10px;height:24px;border-radius:5px;background:linear-gradient(to right,#efefef,#bdbdbd);border:1px solid #8e8e8e"></div><svg style="left:434px;top:396px" width="10" height="24" viewBox="0 0 10 24"><path d="M5 5 L7.5 9.5 H2.5Z M5 19 L7.5 14.5 H2.500Z" fill="none" stroke="#666" stroke-width=".8"/><path d="M1 12 H9" stroke="#999" stroke-width=".8"/></svg>
<div style="left:447px;top:399px;width:26px;height:19px;background:#ffc20e;box-shadow:inset 1px 1px 0 #7a6a3a,1px 1px 0 #c9b98f"></div>
<div class="t" style="left:451px;top:402px;font-size:11.5px;color:#000;font-weight:bold;line-height:14px;">8</div>
<div class="t" style="left:322px;top:445px;font-size:11.3px;color:#000;font-weight:bold;line-height:14px;">Display SNR threshold</div>
<div style="left:448px;top:437px;width:10px;height:24px;border-radius:5px;background:linear-gradient(to right,#efefef,#bdbdbd);border:1px solid #8e8e8e"></div><svg style="left:448px;top:437px" width="10" height="24" viewBox="0 0 10 24"><path d="M5 5 L7.5 9.5 H2.5Z M5 19 L7.5 14.5 H2.500Z" fill="none" stroke="#666" stroke-width=".8"/><path d="M1 12 H9" stroke="#999" stroke-width=".8"/></svg>
<div style="left:461px;top:441px;width:39px;height:19px;background:#ffc20e;box-shadow:inset 1px 1px 0 #7a6a3a,1px 1px 0 #c9b98f"></div>
<div class="t" style="left:464px;top:444px;font-size:11.5px;color:#000;font-weight:bold;line-height:14px;">1.002</div>
<div class="t" style="left:530px;top:347px;font-size:10.7px;color:#143a96;font-weight:bold;line-height:13px;">Scanner position</div>
<div class="t" style="left:552px;top:377px;font-size:19.5px;color:#111;line-height:24px;letter-spacing:-.4px">AZ</div>
<div class="t" style="left:555px;top:425px;font-size:19.5px;color:#111;line-height:24px;letter-spacing:-.4px">EL</div>
<div style="left:580px;top:371px;width:93px;height:31px;background:#8c7c5e;box-shadow:inset 2px 2px 1px #6f6148,inset -2px -2px 1px #b9aa88"></div>
<div style="left:582px;top:373px;width:88px;height:27px;background:#fff"></div>
<div class="t" style="left:586px;top:375px;font-size:18.6px;color:#000;line-height:23px;letter-spacing:-.55px">090.000</div>
<div style="left:580px;top:419px;width:93px;height:31px;background:#8c7c5e;box-shadow:inset 2px 2px 1px #6f6148,inset -2px -2px 1px #b9aa88"></div>
<div style="left:582px;top:421px;width:88px;height:27px;background:#fff"></div>
<div class="t" style="left:586px;top:423px;font-size:18.6px;color:#000;line-height:23px;letter-spacing:-.55px">090.000</div>
<div class="pnl" style="left:302px;top:513px;width:408px;height:156px"></div>
<svg style="left:377px;top:522px" width="310" height="105" viewBox="0 0 310 105"><rect width="310" height="105" fill="#000"/><path d="M5.5 0V105M10.5 0V105M15.5 0V105M21.5 0V105M26.5 0V105M31.5 0V105M36.5 0V105M41.5 0V105M46.5 0V105M57.5 0V105M62.5 0V105M67.5 0V105M72.5 0V105M77.5 0V105M82.5 0V105M88.5 0V105M93.5 0V105M98.5 0V105M108.5 0V105M113.5 0V105M118.5 0V105M124.5 0V105M129.5 0V105M134.5 0V105M139.5 0V105M144.5 0V105M149.5 0V105M160.5 0V105M165.5 0V105M170.5 0V105M175.5 0V105M180.5 0V105M185.5 0V105M191.5 0V105M196.5 0V105M201.5 0V105M211.5 0V105M216.5 0V105M221.5 0V105M227.5 0V105M232.5 0V105M237.5 0V105M242.5 0V105M247.5 0V105M252.5 0V105M263.5 0V105M268.5 0V105M273.5 0V105M278.5 0V105M283.5 0V105M288.5 0V105M294.5 0V105M299.5 0V105M304.5 0V105M0 5.5H310M0 10.5H310M0 16.5H310M0 21.5H310M0 31.5H310M0 36.5H310M0 42.5H310M0 47.5H310M0 57.5H310M0 62.5H310M0 68.5H310M0 73.5H310M0 83.5H310M0 88.5H310M0 94.5H310M0 99.5H310" stroke="#0a300a" stroke-width="1" fill="none"/><path d="M0.5 0V105M52.5 0V105M103.5 0V105M154.5 0V105M206.5 0V105M258.5 0V105M309.5 0V105M0 0.5H310M0 26.5H310M0 52.5H310M0 78.5H310M0 104.5H310" stroke="#175217" stroke-width="1" fill="none"/><polyline points="1.5,64.9 1.5,58.7 2.5,47.4 3.5,42.6 4.5,45.9 5.5,44.3 6.5,43.0 7.5,45.3 8.5,44.6 9.5,44.2 10.5,46.5 11.5,45.6 12.5,45.1 13.5,44.4 14.5,45.7 15.5,46.1 16.5,47.4 17.5,46.5 18.5,44.6 19.5,46.0 20.5,47.7 21.5,47.8 22.5,41.6 23.5,44.4 24.5,45.4 25.5,51.8 26.5,45.6 27.5,46.0 28.5,43.5 29.5,46.2 30.5,47.4 31.5,46.2 32.5,51.9 33.5,45.2 34.5,46.9 35.5,49.5 36.5,44.7 37.5,43.5 38.5,51.7 39.5,50.0 40.5,47.6 41.5,48.0 42.5,49.7 43.5,51.4 44.5,42.9 45.5,46.0 46.5,52.6 47.5,53.2 48.5,44.2 49.5,46.4 50.5,44.0 51.5,47.2 52.5,52.6 53.5,49.1 54.5,57.2 55.5,52.7" fill="none" stroke="#fff" stroke-width="1.7"/><path d="M51.5 0V60" stroke="#fff" stroke-width="1.2"/><path d="M56.5 1V104M57.5 41V64M58.5 1V104M59.5 1V104M60.5 1V104M61.5 40V104M62.5 47V104M63.5 40V104M64.5 32V61M65.5 40V63M66.5 1V104M67.5 45V104M68.5 1V55M69.5 32V64M70.5 1V104M71.5 47V104M72.5 1V104M73.5 1V104M74.5 1V104M75.5 47V104M76.5 1V104M77.5 1V104M78.5 47V104M79.5 1V104M80.5 53V104M81.5 1V104M82.5 47V55M83.5 32V59M84.5 44V104M85.5 47V104M86.5 32V58M87.5 43V104M88.5 47V104M89.5 55V104M90.5 45V58M91.5 1V104M92.5 1V104M93.5 1V104M94.5 1V104M95.5 1V104M96.5 1V104M97.5 17V104M98.5 1V104M99.5 1V104M100.5 41V104M101.5 1V104M102.5 1V86M103.5 39V104M104.5 1V104M105.5 1V104M106.5 1V104M107.5 1V104M108.5 1V104M109.5 46V104M110.5 1V104M111.5 1V104M112.5 14V104M113.5 1V104M114.5 1V104M115.5 1V104M116.5 14V104M117.5 16V104M118.5 1V104M119.5 1V104M120.5 1V104M121.5 1V104M122.5 1V104M123.5 35V104M124.5 25V104M125.5 34V104M126.5 1V104M127.5 1V104M128.5 1V81M129.5 1V104M130.5 1V104M131.5 1V86M132.5 22V78M133.5 1V104M134.5 1V104M135.5 34V104M136.5 21V104M137.5 1V104M138.5 1V69M139.5 1V104M140.5 35V104M141.5 1V71M142.5 30V104M143.5 1V104M144.5 1V104M145.5 1V104M146.5 1V104M147.5 1V104M148.5 1V104M149.5 1V104M150.5 1V104M151.5 1V104M152.5 1V104M153.5 1V104M154.5 1V104M155.5 1V104M156.5 1V104M157.5 36V104M158.5 1V104M159.5 31V104M160.5 1V104M161.5 1V104M162.5 46V75M163.5 1V104M164.5 1V104M165.5 45V104M166.5 20V71M167.5 1V55M168.5 1V104M169.5 1V104M170.5 1V104M171.5 45V63M172.5 17V104M173.5 49V104M174.5 1V104M175.5 15V104M176.5 1V104M177.5 46V104M178.5 42V104M179.5 49V104M180.5 39V104M181.5 41V104M182.5 1V104M183.5 1V104M184.5 1V104M185.5 26V104M186.5 1V104M187.5 1V104M188.5 1V104M189.5 1V104M190.5 1V104M191.5 47V104M192.5 1V104M193.5 1V104M194.5 1V85M195.5 1V104M196.5 32V87M197.5 1V87M198.5 1V104M199.5 1V104M200.5 1V104M201.5 38V104M202.5 1V104M203.5 1V104M204.5 1V104M205.5 1V104M206.5 14V104M207.5 1V104M208.5 1V104M209.5 29V104M210.5 1V104M211.5 1V104M212.5 1V104M213.5 1V104M214.5 1V104M215.5 32V104M216.5 1V104M217.5 1V104M218.5 1V104M219.5 1V104M220.5 1V104M221.5 1V104M222.5 48V104M223.5 1V78M224.5 28V104M225.5 47V85M226.5 33V104M227.5 37V75M228.5 50V71M229.5 48V104M230.5 44V65M231.5 45V104M232.5 1V104M233.5 43V104M234.5 49V104M235.5 47V104M236.5 36V104M237.5 1V104M238.5 47V104M239.5 39V72M240.5 1V104M241.5 1V104M242.5 48V104M243.5 1V74M244.5 1V104M245.5 1V104M246.5 49V104M247.5 1V104M248.5 47V104M249.5 1V73M250.5 1V104M251.5 48V104M252.5 48V104M253.5 41V104M254.5 40V104M255.5 1V104M256.5 1V77M257.5 37V60M258.5 1V104M259.5 49V104M260.5 43V104M261.5 41V104M262.5 41V104M263.5 1V63M264.5 1V104M265.5 38V104M266.5 1V60M267.5 45V104M268.5 44V104M269.5 1V104M270.5 45V75M271.5 1V104M272.5 45V104M273.5 40V104M274.5 1V104M275.5 1V104M276.5 1V60M277.5 46V77M278.5 46V104M279.5 49V63M280.5 41V64M281.5 48V104M282.5 50V75M283.5 1V104M284.5 39V104M285.5 38V104M286.5 46V104M287.5 38V64M288.5 1V104M289.5 1V104M290.5 48V104M291.5 44V104M292.5 39V60M293.5 1V104M294.5 1V104M295.5 43V104M296.5 1V104M297.5 46V76M298.5 38V104M299.5 50V104M300.5 40V104M301.5 1V72M302.5 39V104M303.5 47V64M304.5 1V104M305.5 37V104M306.5 1V67M307.5 42V104M308.5 1V104M309.5 1V104" stroke="#fff" stroke-width="1.05" fill="none"/></svg>
<div class="ax" style="left:336px;top:517px;width:33px;text-align:right">5.00</div>
<div style="left:371px;top:523px;width:5px;height:1px;background:#000"></div>
<div class="ax" style="left:336px;top:542.5px;width:33px;text-align:right">2.50</div>
<div style="left:371px;top:548.5px;width:5px;height:1px;background:#000"></div>
<div class="ax" style="left:336px;top:568px;width:33px;text-align:right">0.00</div>
<div style="left:371px;top:574px;width:5px;height:1px;background:#000"></div>
<div class="ax" style="left:336px;top:594px;width:33px;text-align:right">-2.50</div>
<div style="left:371px;top:600px;width:5px;height:1px;background:#000"></div>
<div class="ax" style="left:336px;top:619.5px;width:33px;text-align:right">-5.00</div>
<div style="left:371px;top:625.5px;width:5px;height:1px;background:#000"></div>
<div style="left:377.5px;top:628px;width:1px;height:4px;background:#000"></div>
<div class="ax" style="left:353.0px;top:634px;width:50px;text-align:center">0</div>
<div style="left:428.9px;top:628px;width:1px;height:4px;background:#000"></div>
<div class="ax" style="left:404.4px;top:634px;width:50px;text-align:center">2000</div>
<div style="left:480.3px;top:628px;width:1px;height:4px;background:#000"></div>
<div class="ax" style="left:455.8px;top:634px;width:50px;text-align:center">4000</div>
<div style="left:531.7px;top:628px;width:1px;height:4px;background:#000"></div>
<div class="ax" style="left:507.20000000000005px;top:634px;width:50px;text-align:center">6000</div>
<div style="left:583.1px;top:628px;width:1px;height:4px;background:#000"></div>
<div class="ax" style="left:558.6px;top:634px;width:50px;text-align:center">8000</div>
<div style="left:634.5px;top:628px;width:1px;height:4px;background:#000"></div>
<div class="ax" style="left:610.0px;top:634px;width:50px;text-align:center">10000</div>
<div style="left:685.9px;top:628px;width:1px;height:4px;background:#000"></div>
<div class="ax" style="left:661.4px;top:634px;width:50px;text-align:center">12000</div>
<div class="axb" style="left:480px;top:651px;width:100px;text-align:center">Range (m)</div>
<div class="axb" style="left:282px;top:568px;width:100px;text-align:center;transform:rotate(-90deg)">Velocity (m/s)</div>
<div style="left:292px;top:680px;width:420px;height:108px;border:2px solid #0d2a76;box-shadow:inset 1px 1px 0 #5f6d96,1px 1px 0 #5f6d96"></div>
<div class="t" style="left:308px;top:683px;font-size:11px;color:#123a9a;font-weight:bold;line-height:13px;">Data Logging</div>
<div class="t" style="left:312px;top:702px;font-size:11.5px;color:#000;font-weight:bold;line-height:14px;">Processed Data file</div>
<div class="btn" style="left:430px;top:693px;width:134px;height:24px"></div>
<div class="t" style="left:430px;top:698px;font-size:11.6px;color:#000;font-weight:bold;width:134px;text-align:center;line-height:14px;">Restart processed file</div>
<div class="t" style="left:655px;top:696px;font-size:11px;color:#123a9a;font-weight:bold;line-height:13px;">Logging</div>
<div style="left:296px;top:722px;width:362px;height:18px;background:#86765a;box-shadow:inset 1px 1px 1px #6a5c44,inset -1px -1px 1px #b8aa8a"></div><div style="left:298px;top:723px;width:15px;height:16px;background:#ffc20e"></div><div class="t" style="left:301px;top:724px;font-size:11px;color:#000;font-weight:bold;line-height:14px;">C</div><div style="left:313px;top:723px;width:9px;height:15px;background:#d2d2d2"></div><svg style="left:313px;top:723px" width="9" height="15" viewBox="0 0 9 15"><rect x="2.5" y="2.5" width="3" height="3" fill="#fff" stroke="#000"/><rect x="4.5" y="8.5" width="3" height="3" fill="#fff" stroke="#000"/><path d="M4 5.5V10H4.500" stroke="#000" fill="none"/></svg><div style="left:322px;top:723px;width:334px;height:15px;background:#fdfdfd"></div><div class="t" style="left:324px;top:726px;font-size:7.8px;color:#000;line-height:9px;letter-spacing:-.05px">C:\Lidar\Data\Proc\2023\202308\20230809\Stare_122_20230805_05.hpl</div>
<div class="t" style="left:310px;top:743px;font-size:12px;color:#000;font-weight:bold;line-height:14px;">RAW Data file</div>
<div style="left:296px;top:762px;width:362px;height:18px;background:#86765a;box-shadow:inset 1px 1px 1px #6a5c44,inset -1px -1px 1px #b8aa8a"></div><div style="left:298px;top:763px;width:15px;height:16px;background:#ffc20e"></div><div class="t" style="left:301px;top:764px;font-size:11px;color:#000;font-weight:bold;line-height:14px;">C</div><div style="left:313px;top:763px;width:9px;height:15px;background:#d2d2d2"></div><svg style="left:313px;top:763px" width="9" height="15" viewBox="0 0 9 15"><rect x="2.5" y="2.5" width="3" height="3" fill="#fff" stroke="#000"/><rect x="4.5" y="8.5" width="3" height="3" fill="#fff" stroke="#000"/><path d="M4 5.5V10H4.500" stroke="#000" fill="none"/></svg><div style="left:322px;top:763px;width:334px;height:15px;background:#fdfdfd"></div>
<div style="left:660px;top:719px;width:43px;height:24px;border-radius:12px;background:linear-gradient(#f4f4f4,#bcbcbc 60%,#a8a8a8);border:1px solid #6d6d6d;box-shadow:1px 2px 2px #6b5e45"></div><div class="t" style="left:665px;top:724px;font-size:11.5px;color:#000;font-weight:bold;line-height:14px;letter-spacing:-.4px">ON</div><svg style="left:687px;top:724px" width="12" height="14" viewBox="0 0 12 14"><path d="M1 1 Q3 7 1 13 Q9 11 11 7 Q9 3 1 1Z" fill="#55e028" stroke="#3a7a2a" stroke-width=".6"/></svg>
<div style="left:660px;top:758px;width:43px;height:24px;border-radius:12px;background:linear-gradient(#f4f4f4,#bcbcbc 60%,#a8a8a8);border:1px solid #6d6d6d;box-shadow:1px 2px 2px #6b5e45"></div><div class="t" style="left:665px;top:763px;font-size:11.5px;color:#000;font-weight:bold;line-height:14px;letter-spacing:-.4px">OFF</div><svg style="left:687px;top:763px" width="12" height="14" viewBox="0 0 12 14"><path d="M1 1 Q3 7 1 13 Q9 11 11 7 Q9 3 1 1Z" fill="#2f6a24" stroke="#3a7a2a" stroke-width=".6"/></svg>
<div class="btn" style="left:301px;top:797px;width:100px;height:47px"></div>
<div class="t" style="left:301px;top:800px;font-size:15px;color:#e8202a;width:99px;text-align:center;line-height:21px;">STOP<br>software</div>
<div class="btn" style="left:541px;top:798px;width:116px;height:47px"></div>
<div class="t" style="left:541px;top:801px;font-size:15px;color:#111;width:116px;text-align:center;line-height:21px;">Change LiDAR<br>Settings</div>
<div class="t" style="left:723px;top:161px;font-size:15px;color:#111;line-height:18px;">Backscatter</div>
<div class="t" style="left:723px;top:487px;font-size:15px;color:#111;line-height:18px;">Doppler</div>
<div class="pnl" style="left:721px;top:182px;width:576px;height:299px"></div>
<div class="pnl" style="left:721px;top:508px;width:576px;height:299px"></div>
<svg width="0" height="0" style="left:0;top:0"><defs><filter id="dots" x="0" y="0" width="100%" height="100%" color-interpolation-filters="sRGB"><feTurbulence type="fractalNoise" baseFrequency="0.8" numOctaves="1" seed="5" result="n"/><feColorMatrix in="n" type="matrix" values="0 0 0 0 0  0 0 0 0 0  0 0 0 0 0  1 0 0 0 0" result="na"/><feComposite in="na" in2="SourceGraphic" operator="arithmetic" k1="0" k2="1" k3="1" k4="0" result="s"/><feComponentTransfer in="s"><feFuncR type="discrete" tableValues="0"/><feFuncG type="discrete" tableValues="0"/><feFuncB type="discrete" tableValues="0"/><feFuncA type="discrete" tableValues="0 0 0 0 0 0 0 0 1 1"/></feComponentTransfer></filter><filter id="dots2" x="0" y="0" width="100%" height="100%" color-interpolation-filters="sRGB"><feTurbulence type="fractalNoise" baseFrequency="0.8 0.55" numOctaves="1" seed="31" result="n"/><feColorMatrix in="n" type="matrix" values="0 0 0 0 0  0 0 0 0 0  0 0 0 0 0  0 1 0 0 0" result="na"/><feComposite in="na" in2="SourceGraphic" operator="arithmetic" k1="0" k2="1" k3="1" k4="0" result="s"/><feComponentTransfer in="s"><feFuncR type="discrete" tableValues="0"/><feFuncG type="discrete" tableValues="0"/><feFuncB type="discrete" tableValues="0"/><feFuncA type="discrete" tableValues="0 0 0 0 0 0 0 0 1 1"/></feComponentTransfer></filter><filter id="grain" x="0" y="0" width="100%" height="100%" color-interpolation-filters="sRGB"><feTurbulence type="fractalNoise" baseFrequency="0.4" numOctaves="1" seed="17" result="n"/><feColorMatrix in="n" type="matrix" values="1.1 0 0 0 -0.03  0 0 0 0 .5  0 0 0 0 .5  0 0 0 0 1" result="nm"/><feComposite in="nm" in2="SourceGraphic" operator="arithmetic" k1="0" k2="1" k3="1" k4="-0.5"/></filter><filter id="dn" x="0" y="0" width="100%" height="100%" color-interpolation-filters="sRGB"><feTurbulence type="fractalNoise" baseFrequency="0.7 0.33" numOctaves="1" seed="8" result="n"/><feColorMatrix in="n" type="matrix" values="1 0 0 0 0  0 1 0 0 0  0 -0.75 0.45 0 0.65  0 0 0 0 1" result="nm"/><feComposite in="nm" in2="SourceGraphic" operator="arithmetic" k1="0" k2="1" k3="1" k4="-0.5" result="s"/><feComponentTransfer in="s"><feFuncR type="discrete" tableValues="0 1"/><feFuncG type="discrete" tableValues="0 1"/><feFuncB type="discrete" tableValues="0 1"/></feComponentTransfer></filter><filter id="bl6" x="-20%" y="-50%" width="140%" height="200%"><feGaussianBlur stdDeviation="6 3"/></filter><linearGradient id="bsg" x1="0" y1="0" x2="0" y2="1"><stop offset="0" stop-color="#78f022"/><stop offset="0.04" stop-color="#8cf028"/><stop offset="0.065" stop-color="#c0f434"/><stop offset="0.09" stop-color="#84f026"/><stop offset="0.13" stop-color="#64f01e"/><stop offset="0.2" stop-color="#94f02a"/><stop offset="0.25" stop-color="#6cf020"/><stop offset="0.3" stop-color="#60f01c"/><stop offset="0.4" stop-color="#34f010"/><stop offset="0.5" stop-color="#14f008"/><stop offset="0.7" stop-color="#0cec0c"/><stop offset="0.74" stop-color="#0ae412"/><stop offset="0.8" stop-color="#10f008"/><stop offset="0.86" stop-color="#48f410"/><stop offset="0.92" stop-color="#a0f420"/><stop offset="0.955" stop-color="#d4f82e"/><stop offset="0.985" stop-color="#a0f420"/><stop offset="0.994" stop-color="#50d010"/><stop offset="1" stop-color="#0a400a"/></linearGradient><linearGradient id="bsd" x1="0" y1="0" x2="0" y2="1"><stop offset="0" stop-color="#000" stop-opacity="0.205"/><stop offset="0.14" stop-color="#000" stop-opacity="0.195"/><stop offset="0.3" stop-color="#000" stop-opacity="0.16"/><stop offset="0.5" stop-color="#000" stop-opacity="0.125"/><stop offset="0.62" stop-color="#000" stop-opacity="0.09"/><stop offset="0.72" stop-color="#000" stop-opacity="0.05"/><stop offset="0.8" stop-color="#000" stop-opacity="0"/></linearGradient><linearGradient id="dps" x1="0" y1="0" x2="0" y2="1"><stop offset="0" stop-color="rgb(162,98,152)"/><stop offset="0.14" stop-color="rgb(162,100,150)"/><stop offset="0.21" stop-color="rgb(154,118,130)"/><stop offset="0.5" stop-color="rgb(148,136,110)"/><stop offset="0.7" stop-color="rgb(150,150,98)"/><stop offset="1" stop-color="rgb(156,160,88)"/></linearGradient><linearGradient id="dpg" x1="0" y1="0" x2="0" y2="1"><stop offset="0" stop-color="#d030c8"/><stop offset="0.45" stop-color="#d0a050"/><stop offset="0.55" stop-color="#cce43a"/><stop offset="0.65" stop-color="#b8ec30"/><stop offset="0.72" stop-color="#d0ec30"/><stop offset="0.79" stop-color="#88e828"/><stop offset="0.84" stop-color="#a8ec28"/><stop offset="0.9" stop-color="#e8f028"/><stop offset="0.97" stop-color="#f8f020"/><stop offset="0.988" stop-color="#b0f020"/><stop offset="1" stop-color="#40e010"/></linearGradient><linearGradient id="dpm" x1="0" y1="0" x2="0" y2="1"><stop offset="0" stop-color="#fff" stop-opacity="1"/><stop offset="0.6" stop-color="#fff" stop-opacity="1"/><stop offset="0.7" stop-color="#fff" stop-opacity="0.6"/><stop offset="0.78" stop-color="#fff" stop-opacity="0.2"/><stop offset="0.86" stop-color="#fff" stop-opacity="0.04"/><stop offset="0.92" stop-color="#fff" stop-opacity="0"/></linearGradient><mask id="dpmask" maskUnits="userSpaceOnUse" x="0" y="0" width="478" height="266"><rect width="478" height="266" fill="url(#dpm)"/></mask><linearGradient id="dpd" x1="0" y1="0" x2="0" y2="1"><stop offset="0" stop-color="#000" stop-opacity="0.2"/><stop offset="0.2" stop-color="#000" stop-opacity="0.185"/><stop offset="0.3" stop-color="#000" stop-opacity="0.15"/><stop offset="0.5" stop-color="#000" stop-opacity="0.12"/><stop offset="0.7" stop-color="#000" stop-opacity="0.06"/><stop offset="0.8" stop-color="#000" stop-opacity="0"/></linearGradient><linearGradient id="cb1" x1="0" y1="0" x2="0" y2="1"><stop offset="0" stop-color="#a010a0"/><stop offset="0.06" stop-color="#b01080"/><stop offset="0.13" stop-color="#d00840"/><stop offset="0.2" stop-color="#f80010"/><stop offset="0.245" stop-color="#ff1000"/><stop offset="0.29" stop-color="#ff8000"/><stop offset="0.34" stop-color="#ffc800"/><stop offset="0.41" stop-color="#ffff30"/><stop offset="0.47" stop-color="#90f010"/><stop offset="0.52" stop-color="#00f010"/><stop offset="0.6" stop-color="#10d030"/><stop offset="0.68" stop-color="#18a868"/><stop offset="0.75" stop-color="#208890"/><stop offset="0.82" stop-color="#2848e0"/><stop offset="0.87" stop-color="#3030ff"/><stop offset="0.92" stop-color="#8080f0"/><stop offset="0.97" stop-color="#d0d0e0"/><stop offset="1" stop-color="#e8e8f0"/></linearGradient><linearGradient id="bsg2" gradientUnits="userSpaceOnUse" x1="0" y1="0" x2="0" y2="266"><stop offset="0" stop-color="#78f022"/><stop offset="0.04" stop-color="#8cf028"/><stop offset="0.065" stop-color="#c0f434"/><stop offset="0.09" stop-color="#84f026"/><stop offset="0.13" stop-color="#64f01e"/><stop offset="0.2" stop-color="#94f02a"/><stop offset="0.25" stop-color="#6cf020"/><stop offset="0.3" stop-color="#60f01c"/><stop offset="0.4" stop-color="#34f010"/><stop offset="0.5" stop-color="#14f008"/><stop offset="0.7" stop-color="#0cec0c"/><stop offset="0.74" stop-color="#0ae412"/><stop offset="0.8" stop-color="#10f008"/><stop offset="0.86" stop-color="#48f410"/><stop offset="0.92" stop-color="#a0f420"/><stop offset="0.955" stop-color="#d4f82e"/><stop offset="0.985" stop-color="#a0f420"/><stop offset="0.994" stop-color="#50d010"/><stop offset="1" stop-color="#0a400a"/></linearGradient><linearGradient id="bsmg" gradientUnits="userSpaceOnUse" x1="0" y1="150" x2="0" y2="266"><stop offset="0" stop-color="#fff" stop-opacity="0"/><stop offset="0.35" stop-color="#fff" stop-opacity="0.8"/><stop offset="0.5" stop-color="#fff" stop-opacity="1"/><stop offset="1" stop-color="#fff" stop-opacity="1"/></linearGradient><mask id="bsm" maskUnits="userSpaceOnUse" x="0" y="150" width="478" height="116"><rect y="150" width="478" height="116" fill="url(#bsmg)"/></mask><linearGradient id="bsd2" gradientUnits="userSpaceOnUse" x1="0" y1="0" x2="0" y2="266"><stop offset="0" stop-color="#000" stop-opacity="0.18"/><stop offset="0.14" stop-color="#000" stop-opacity="0.178"/><stop offset="0.19" stop-color="#000" stop-opacity="0.155"/><stop offset="0.3" stop-color="#000" stop-opacity="0.135"/><stop offset="0.4" stop-color="#000" stop-opacity="0.122"/><stop offset="0.5" stop-color="#000" stop-opacity="0.11"/><stop offset="0.6" stop-color="#000" stop-opacity="0.097"/><stop offset="0.7" stop-color="#000" stop-opacity="0.08"/><stop offset="0.78" stop-color="#000" stop-opacity="0.055"/><stop offset="0.8" stop-color="#000" stop-opacity="0"/></linearGradient><clipPath id="hc"><rect width="478" height="266"/></clipPath></defs></svg>
<div class="axb" style="left:746.5px;top:186.5px;width:40px;text-align:right;font-size:12px">5000</div><div style="left:789px;top:192.0px;width:5px;height:1px;background:#000"></div><div class="axb" style="left:746.5px;top:213.0px;width:40px;text-align:right;font-size:12px">4500</div><div style="left:789px;top:218.5px;width:5px;height:1px;background:#000"></div><div class="axb" style="left:746.5px;top:239.5px;width:40px;text-align:right;font-size:12px">4000</div><div style="left:789px;top:245.0px;width:5px;height:1px;background:#000"></div><div class="axb" style="left:746.5px;top:266.0px;width:40px;text-align:right;font-size:12px">3500</div><div style="left:789px;top:271.5px;width:5px;height:1px;background:#000"></div><div class="axb" style="left:746.5px;top:292.5px;width:40px;text-align:right;font-size:12px">3000</div><div style="left:789px;top:298.0px;width:5px;height:1px;background:#000"></div><div class="axb" style="left:746.5px;top:319.0px;width:40px;text-align:right;font-size:12px">2500</div><div style="left:789px;top:324.5px;width:5px;height:1px;background:#000"></div><div class="axb" style="left:746.5px;top:345.5px;width:40px;text-align:right;font-size:12px">2000</div><div style="left:789px;top:351.0px;width:5px;height:1px;background:#000"></div><div class="axb" style="left:746.5px;top:372.0px;width:40px;text-align:right;font-size:12px">1500</div><div style="left:789px;top:377.5px;width:5px;height:1px;background:#000"></div><div class="axb" style="left:746.5px;top:398.5px;width:40px;text-align:right;font-size:12px">1000</div><div style="left:789px;top:404.0px;width:5px;height:1px;background:#000"></div><div class="axb" style="left:746.5px;top:425.0px;width:40px;text-align:right;font-size:12px">500</div><div style="left:789px;top:430.5px;width:5px;height:1px;background:#000"></div><div class="axb" style="left:746.5px;top:451.5px;width:40px;text-align:right;font-size:12px">0</div><div style="left:789px;top:457.0px;width:5px;height:1px;background:#000"></div><div class="axb" style="left:697px;top:316px;width:100px;text-align:center;font-size:12px;transform:rotate(-90deg)">Range (m)</div><div style="left:795px;top:459px;width:1px;height:4px;background:#000"></div><div style="left:1272px;top:459px;width:1px;height:4px;background:#000"></div><div class="axb" style="left:775px;top:466px;font-size:12px">945196</div><div class="axb" style="left:1251px;top:466px;font-size:12px">945695</div>
<div class="axb" style="left:746.5px;top:512.5px;width:40px;text-align:right;font-size:12px">5000</div><div style="left:789px;top:518.0px;width:5px;height:1px;background:#000"></div><div class="axb" style="left:746.5px;top:539.0px;width:40px;text-align:right;font-size:12px">4500</div><div style="left:789px;top:544.5px;width:5px;height:1px;background:#000"></div><div class="axb" style="left:746.5px;top:565.5px;width:40px;text-align:right;font-size:12px">4000</div><div style="left:789px;top:571.0px;width:5px;height:1px;background:#000"></div><div class="axb" style="left:746.5px;top:592.0px;width:40px;text-align:right;font-size:12px">3500</div><div style="left:789px;top:597.5px;width:5px;height:1px;background:#000"></div><div class="axb" style="left:746.5px;top:618.5px;width:40px;text-align:right;font-size:12px">3000</div><div style="left:789px;top:624.0px;width:5px;height:1px;background:#000"></div><div class="axb" style="left:746.5px;top:645.0px;width:40px;text-align:right;font-size:12px">2500</div><div style="left:789px;top:650.5px;width:5px;height:1px;background:#000"></div><div class="axb" style="left:746.5px;top:671.5px;width:40px;text-align:right;font-size:12px">2000</div><div style="left:789px;top:677.0px;width:5px;height:1px;background:#000"></div><div class="axb" style="left:746.5px;top:698.0px;width:40px;text-align:right;font-size:12px">1500</div><div style="left:789px;top:703.5px;width:5px;height:1px;background:#000"></div><div class="axb" style="left:746.5px;top:724.5px;width:40px;text-align:right;font-size:12px">1000</div><div style="left:789px;top:730.0px;width:5px;height:1px;background:#000"></div><div class="axb" style="left:746.5px;top:751.0px;width:40px;text-align:right;font-size:12px">500</div><div style="left:789px;top:756.5px;width:5px;height:1px;background:#000"></div><div class="axb" style="left:746.5px;top:777.5px;width:40px;text-align:right;font-size:12px">0</div><div style="left:789px;top:783.0px;width:5px;height:1px;background:#000"></div><div class="axb" style="left:697px;top:642px;width:100px;text-align:center;font-size:12px;transform:rotate(-90deg)">Range (m)</div><div style="left:795px;top:785px;width:1px;height:4px;background:#000"></div><div style="left:1272px;top:785px;width:1px;height:4px;background:#000"></div><div class="axb" style="left:775px;top:792px;font-size:12px">945196</div><div class="axb" style="left:1251px;top:792px;font-size:12px">945695</div>
<svg style="left:795px;top:191px;overflow:hidden" width="478" height="266" viewBox="0 0 478 266"><g filter="url(#grain)"><rect width="478" height="266" fill="url(#bsg)"/></g><rect y="150" width="478" height="116" fill="url(#bsg2)" mask="url(#bsm)"/><g filter="url(#dots)"><rect width="478" height="213" fill="url(#bsd2)"/><rect y="30" width="478" height="8" fill="#000" opacity=".035"/><rect width="478" height="5" fill="#000" opacity=".02"/><rect y="60" width="478" height="5" fill="#000" opacity=".02"/></g><rect y="265" width="478" height="1" fill="#0a400a" opacity=".8"/></svg>
<svg style="left:795px;top:517px;overflow:hidden" width="478" height="266" viewBox="0 0 478 266"><defs><linearGradient id="pm0" gradientUnits="userSpaceOnUse" x1="0" y1="0" x2="0" y2="266"><stop offset="0.000" stop-color="rgb(26,26,26)"/><stop offset="0.000" stop-color="rgb(33,33,33)"/><stop offset="0.080" stop-color="rgb(56,56,56)"/><stop offset="0.140" stop-color="rgb(76,76,76)"/><stop offset="0.220" stop-color="rgb(99,99,99)"/><stop offset="0.300" stop-color="rgb(128,128,128)"/><stop offset="0.350" stop-color="rgb(184,184,184)"/><stop offset="1.000" stop-color="rgb(184,184,184)"/></linearGradient><linearGradient id="pm1" gradientUnits="userSpaceOnUse" x1="0" y1="0" x2="0" y2="266"><stop offset="0.000" stop-color="rgb(26,26,26)"/><stop offset="0.060" stop-color="rgb(33,33,33)"/><stop offset="0.140" stop-color="rgb(56,56,56)"/><stop offset="0.200" stop-color="rgb(76,76,76)"/><stop offset="0.280" stop-color="rgb(99,99,99)"/><stop offset="0.360" stop-color="rgb(128,128,128)"/><stop offset="0.410" stop-color="rgb(184,184,184)"/><stop offset="1.000" stop-color="rgb(184,184,184)"/></linearGradient><linearGradient id="pm2" gradientUnits="userSpaceOnUse" x1="0" y1="0" x2="0" y2="266"><stop offset="0.000" stop-color="rgb(26,26,26)"/><stop offset="0.120" stop-color="rgb(33,33,33)"/><stop offset="0.200" stop-color="rgb(56,56,56)"/><stop offset="0.260" stop-color="rgb(76,76,76)"/><stop offset="0.340" stop-color="rgb(99,99,99)"/><stop offset="0.420" stop-color="rgb(128,128,128)"/><stop offset="0.470" stop-color="rgb(184,184,184)"/><stop offset="1.000" stop-color="rgb(184,184,184)"/></linearGradient><linearGradient id="pm3" gradientUnits="userSpaceOnUse" x1="0" y1="0" x2="0" y2="266"><stop offset="0.000" stop-color="rgb(26,26,26)"/><stop offset="0.180" stop-color="rgb(33,33,33)"/><stop offset="0.260" stop-color="rgb(56,56,56)"/><stop offset="0.320" stop-color="rgb(76,76,76)"/><stop offset="0.400" stop-color="rgb(99,99,99)"/><stop offset="0.480" stop-color="rgb(128,128,128)"/><stop offset="0.530" stop-color="rgb(184,184,184)"/><stop offset="1.000" stop-color="rgb(184,184,184)"/></linearGradient><linearGradient id="pm4" gradientUnits="userSpaceOnUse" x1="0" y1="0" x2="0" y2="266"><stop offset="0.000" stop-color="rgb(26,26,26)"/><stop offset="0.240" stop-color="rgb(33,33,33)"/><stop offset="0.320" stop-color="rgb(56,56,56)"/><stop offset="0.380" stop-color="rgb(76,76,76)"/><stop offset="0.460" stop-color="rgb(99,99,99)"/><stop offset="0.540" stop-color="rgb(128,128,128)"/><stop offset="0.590" stop-color="rgb(184,184,184)"/><stop offset="1.000" stop-color="rgb(184,184,184)"/></linearGradient><linearGradient id="pm5" gradientUnits="userSpaceOnUse" x1="0" y1="0" x2="0" y2="266"><stop offset="0.000" stop-color="rgb(26,26,26)"/><stop offset="0.300" stop-color="rgb(33,33,33)"/><stop offset="0.380" stop-color="rgb(56,56,56)"/><stop offset="0.440" stop-color="rgb(76,76,76)"/><stop offset="0.520" stop-color="rgb(99,99,99)"/><stop offset="0.600" stop-color="rgb(128,128,128)"/><stop offset="0.650" stop-color="rgb(184,184,184)"/><stop offset="1.000" stop-color="rgb(184,184,184)"/></linearGradient><linearGradient id="pm6" gradientUnits="userSpaceOnUse" x1="0" y1="0" x2="0" y2="266"><stop offset="0.000" stop-color="rgb(26,26,26)"/><stop offset="0.360" stop-color="rgb(33,33,33)"/><stop offset="0.440" stop-color="rgb(56,56,56)"/><stop offset="0.500" stop-color="rgb(76,76,76)"/><stop offset="0.580" stop-color="rgb(99,99,99)"/><stop offset="0.660" stop-color="rgb(128,128,128)"/><stop offset="0.710" stop-color="rgb(184,184,184)"/><stop offset="1.000" stop-color="rgb(184,184,184)"/></linearGradient><linearGradient id="pm7" gradientUnits="userSpaceOnUse" x1="0" y1="0" x2="0" y2="266"><stop offset="0.000" stop-color="rgb(26,26,26)"/><stop offset="0.420" stop-color="rgb(33,33,33)"/><stop offset="0.500" stop-color="rgb(56,56,56)"/><stop offset="0.560" stop-color="rgb(76,76,76)"/><stop offset="0.640" stop-color="rgb(99,99,99)"/><stop offset="0.720" stop-color="rgb(128,128,128)"/><stop offset="0.770" stop-color="rgb(184,184,184)"/><stop offset="1.000" stop-color="rgb(184,184,184)"/></linearGradient><linearGradient id="pm8" gradientUnits="userSpaceOnUse" x1="0" y1="0" x2="0" y2="266"><stop offset="0.000" stop-color="rgb(26,26,26)"/><stop offset="0.480" stop-color="rgb(33,33,33)"/><stop offset="0.560" stop-color="rgb(56,56,56)"/><stop offset="0.620" stop-color="rgb(76,76,76)"/><stop offset="0.700" stop-color="rgb(99,99,99)"/><stop offset="0.780" stop-color="rgb(128,128,128)"/><stop offset="0.830" stop-color="rgb(184,184,184)"/><stop offset="1.000" stop-color="rgb(184,184,184)"/></linearGradient><linearGradient id="pm9" gradientUnits="userSpaceOnUse" x1="0" y1="0" x2="0" y2="266"><stop offset="0.000" stop-color="rgb(26,26,26)"/><stop offset="0.540" stop-color="rgb(33,33,33)"/><stop offset="0.620" stop-color="rgb(56,56,56)"/><stop offset="0.680" stop-color="rgb(76,76,76)"/><stop offset="0.760" stop-color="rgb(99,99,99)"/><stop offset="0.840" stop-color="rgb(128,128,128)"/><stop offset="0.890" stop-color="rgb(184,184,184)"/><stop offset="1.000" stop-color="rgb(184,184,184)"/></linearGradient><filter id="cmA" x="0" y="0" width="100%" height="100%" color-interpolation-filters="sRGB"><feTurbulence type="fractalNoise" baseFrequency="0.75 0.3" numOctaves="1" seed="8"/><feColorMatrix type="matrix" values="8 0 0 0 -3.15  8 0 0 0 -3.15  8 0 0 0 -3.15  0 0 0 0 1"/><feComponentTransfer><feFuncR type="table" tableValues="0 0.816 0.251 0.063 0.251 0.627 1 1 1 0.878 0.753 0.69 0.69 0.753 0.816 0.878 0.941 1 1 1 1"/><feFuncG type="table" tableValues="0 0.816 0.314 0.69 0.91 0.941 0.941 0.627 0.063 0.063 0.063 0.063 0.125 0.125 0.125 0.125 0.125 0.125 0.125 0.125 0.125"/><feFuncB type="table" tableValues="0 0.973 0.941 0.188 0 0 0 0 0 0.188 0.376 0.565 0.69 0.753 0.816 0.878 0.91 0.941 0.941 0.941 0.941"/></feComponentTransfer></filter><filter id="cmB" x="0" y="0" width="100%" height="100%" color-interpolation-filters="sRGB"><feTurbulence type="fractalNoise" baseFrequency="0.8 0.5" numOctaves="1" seed="3" result="n"/><feColorMatrix in="n" type="matrix" values="0 1 0 0 0  0 1 0 0 0  0 1 0 0 0  0 0 0 0 1" result="ng"/><feComposite in="ng" in2="SourceGraphic" operator="arithmetic" k1="0" k2="0.08" k3="1" k4="-0.04"/><feComponentTransfer><feFuncR type="table" tableValues="0 0.816 0.251 0.063 0.251 0.627 1 1 1 0.878 0.753 0.69 0.69 0.753 0.816 0.878 0.941 1 1 1 1"/><feFuncG type="table" tableValues="0 0.816 0.314 0.69 0.91 0.941 0.941 0.627 0.063 0.063 0.063 0.063 0.125 0.125 0.125 0.125 0.125 0.125 0.125 0.125 0.125"/><feFuncB type="table" tableValues="0 0.973 0.941 0.188 0 0 0 0 0 0.188 0.376 0.565 0.69 0.753 0.816 0.878 0.91 0.941 0.941 0.941 0.941"/></feComponentTransfer></filter><filter id="cmB1" x="0" y="0" width="100%" height="100%" color-interpolation-filters="sRGB"><feTurbulence type="fractalNoise" baseFrequency="0.8 0.4" numOctaves="1" seed="21" result="n"/><feColorMatrix in="n" type="matrix" values="0 1 0 0 0  0 1 0 0 0  0 1 0 0 0  0 0 0 0 1" result="ng"/><feComposite in="ng" in2="SourceGraphic" operator="arithmetic" k1="0" k2="0.55" k3="1" k4="-0.275"/><feComponentTransfer><feFuncR type="table" tableValues="0 0.816 0.251 0.063 0.251 0.627 1 1 1 0.878 0.753 0.69 0.69 0.753 0.816 0.878 0.941 1 1 1 1"/><feFuncG type="table" tableValues="0 0.816 0.314 0.69 0.91 0.941 0.941 0.627 0.063 0.063 0.063 0.063 0.125 0.125 0.125 0.125 0.125 0.125 0.125 0.125 0.125"/><feFuncB type="table" tableValues="0 0.973 0.941 0.188 0 0 0 0 0 0.188 0.376 0.565 0.69 0.753 0.816 0.878 0.91 0.941 0.941 0.941 0.941"/></feComponentTransfer></filter><linearGradient id="b2g" gradientUnits="userSpaceOnUse" x1="0" y1="0" x2="0" y2="266"><stop offset=".64" stop-color="#fff" stop-opacity="0"/><stop offset=".74" stop-color="#fff" stop-opacity=".5"/><stop offset=".82" stop-color="#fff" stop-opacity="1"/></linearGradient><mask id="b2m" maskUnits="userSpaceOnUse" x="0" y="0" width="478" height="266"><rect width="478" height="266" fill="url(#b2g)"/></mask><filter id="thr" x="0" y="0" width="100%" height="100%" color-interpolation-filters="sRGB"><feTurbulence type="fractalNoise" baseFrequency="0.8 0.3" numOctaves="1" seed="12" result="n"/><feColorMatrix in="n" type="matrix" values="0 0 1 0 0  0 0 1 0 0  0 0 1 0 0  0 0 0 0 1" result="ng"/><feComposite in="ng" in2="SourceGraphic" operator="arithmetic" k1="0" k2="1" k3="1" k4="0"/><feComponentTransfer><feFuncR type="discrete" tableValues="0 0 0 0 0 0 0 0 1 1"/><feFuncG type="discrete" tableValues="0 0 0 0 0 0 0 0 1 1"/><feFuncB type="discrete" tableValues="0 0 0 0 0 0 0 0 1 1"/></feComponentTransfer></filter><filter id="bl7" x="-20%" y="-50%" width="140%" height="200%"><feGaussianBlur stdDeviation="7 3"/></filter><linearGradient id="sc" gradientUnits="userSpaceOnUse" x1="0" y1="0" x2="0" y2="266"><stop offset="0.000" stop-color="rgb(71,71,71)"/><stop offset="0.500" stop-color="rgb(72,72,72)"/><stop offset="0.660" stop-color="rgb(70,70,70)"/><stop offset="0.720" stop-color="rgb(73,73,73)"/><stop offset="0.790" stop-color="rgb(67,67,67)"/><stop offset="0.840" stop-color="rgb(69,69,69)"/><stop offset="0.900" stop-color="rgb(74,74,74)"/><stop offset="0.970" stop-color="rgb(76,76,76)"/><stop offset="0.985" stop-color="rgb(66,66,66)"/><stop offset="1.000" stop-color="rgb(48,48,48)"/></linearGradient><mask id="sm" maskUnits="userSpaceOnUse" x="0" y="0" width="478" height="266"><g filter="url(#thr)"><rect x="0" width="1" height="266" fill="url(#pm8)"/><rect x="1" width="1" height="266" fill="url(#pm8)"/><rect x="2" width="1" height="266" fill="url(#pm2)"/><rect x="3" width="1" height="266" fill="url(#pm9)"/><rect x="4" width="1" height="266" fill="url(#pm1)"/><rect x="5" width="1" height="266" fill="url(#pm0)"/><rect x="6" width="2" height="266" fill="url(#pm2)"/><rect x="8" width="1" height="266" fill="url(#pm1)"/><rect x="9" width="1" height="266" fill="url(#pm5)"/><rect x="10" width="1" height="266" fill="url(#pm2)"/><rect x="11" width="1" height="266" fill="url(#pm2)"/><rect x="12" width="1" height="266" fill="url(#pm1)"/><rect x="13" width="1" height="266" fill="url(#pm0)"/><rect x="14" width="2" height="266" fill="url(#pm1)"/><rect x="16" width="2" height="266" fill="url(#pm0)"/><rect x="18" width="1" height="266" fill="url(#pm1)"/><rect x="19" width="1" height="266" fill="url(#pm7)"/><rect x="20" width="2" height="266" fill="url(#pm8)"/><rect x="22" width="1" height="266" fill="url(#pm4)"/><rect x="23" width="1" height="266" fill="url(#pm7)"/><rect x="24" width="1" height="266" fill="url(#pm4)"/><rect x="25" width="2" height="266" fill="url(#pm0)"/><rect x="27" width="2" height="266" fill="url(#pm6)"/><rect x="29" width="1" height="266" fill="url(#pm7)"/><rect x="30" width="1" height="266" fill="url(#pm3)"/><rect x="31" width="1" height="266" fill="url(#pm9)"/><rect x="32" width="3" height="266" fill="url(#pm4)"/><rect x="35" width="1" height="266" fill="url(#pm1)"/><rect x="36" width="2" height="266" fill="url(#pm0)"/><rect x="38" width="2" height="266" fill="url(#pm1)"/><rect x="40" width="1" height="266" fill="url(#pm6)"/><rect x="41" width="2" height="266" fill="url(#pm4)"/><rect x="43" width="1" height="266" fill="url(#pm5)"/><rect x="44" width="1" height="266" fill="url(#pm4)"/><rect x="45" width="1" height="266" fill="url(#pm2)"/><rect x="46" width="1" height="266" fill="url(#pm3)"/><rect x="47" width="3" height="266" fill="url(#pm0)"/><rect x="50" width="1" height="266" fill="url(#pm5)"/><rect x="51" width="2" height="266" fill="url(#pm6)"/><rect x="53" width="1" height="266" fill="url(#pm4)"/><rect x="54" width="1" height="266" fill="url(#pm1)"/><rect x="55" width="3" height="266" fill="url(#pm3)"/><rect x="58" width="1" height="266" fill="url(#pm6)"/><rect x="59" width="1" height="266" fill="url(#pm8)"/><rect x="60" width="2" height="266" fill="url(#pm9)"/><rect x="62" width="2" height="266" fill="url(#pm9)"/><rect x="64" width="1" height="266" fill="url(#pm8)"/><rect x="65" width="3" height="266" fill="url(#pm7)"/><rect x="68" width="2" height="266" fill="url(#pm3)"/><rect x="70" width="3" height="266" fill="url(#pm2)"/><rect x="73" width="1" height="266" fill="url(#pm5)"/><rect x="74" width="1" height="266" fill="url(#pm5)"/><rect x="75" width="2" height="266" fill="url(#pm8)"/><rect x="77" width="1" height="266" fill="url(#pm5)"/><rect x="78" width="2" height="266" fill="url(#pm6)"/><rect x="80" width="1" height="266" fill="url(#pm4)"/><rect x="81" width="1" height="266" fill="url(#pm3)"/><rect x="82" width="1" height="266" fill="url(#pm4)"/><rect x="83" width="1" height="266" fill="url(#pm0)"/><rect x="84" width="3" height="266" fill="url(#pm3)"/><rect x="87" width="2" height="266" fill="url(#pm5)"/><rect x="89" width="1" height="266" fill="url(#pm6)"/><rect x="90" width="2" height="266" fill="url(#pm6)"/><rect x="92" width="2" height="266" fill="url(#pm9)"/><rect x="94" width="2" height="266" fill="url(#pm9)"/><rect x="96" width="1" height="266" fill="url(#pm7)"/><rect x="97" width="3" height="266" fill="url(#pm4)"/><rect x="100" width="1" height="266" fill="url(#pm2)"/><rect x="101" width="1" height="266" fill="url(#pm9)"/><rect x="102" width="3" height="266" fill="url(#pm7)"/><rect x="105" width="2" height="266" fill="url(#pm9)"/><rect x="107" width="1" height="266" fill="url(#pm8)"/><rect x="108" width="1" height="266" fill="url(#pm0)"/><rect x="109" width="1" height="266" fill="url(#pm3)"/><rect x="110" width="1" height="266" fill="url(#pm2)"/><rect x="111" width="1" height="266" fill="url(#pm3)"/><rect x="112" width="1" height="266" fill="url(#pm2)"/><rect x="113" width="1" height="266" fill="url(#pm2)"/><rect x="114" width="3" height="266" fill="url(#pm0)"/><rect x="117" width="2" height="266" fill="url(#pm4)"/><rect x="119" width="1" height="266" fill="url(#pm3)"/><rect x="120" width="2" height="266" fill="url(#pm5)"/><rect x="122" width="1" height="266" fill="url(#pm9)"/><rect x="123" width="1" height="266" fill="url(#pm5)"/><rect x="124" width="2" height="266" fill="url(#pm5)"/><rect x="126" width="1" height="266" fill="url(#pm6)"/><rect x="127" width="1" height="266" fill="url(#pm9)"/><rect x="128" width="1" height="266" fill="url(#pm9)"/><rect x="129" width="2" height="266" fill="url(#pm2)"/><rect x="131" width="2" height="266" fill="url(#pm3)"/><rect x="133" width="1" height="266" fill="url(#pm4)"/><rect x="134" width="1" height="266" fill="url(#pm4)"/><rect x="135" width="1" height="266" fill="url(#pm6)"/><rect x="136" width="2" height="266" fill="url(#pm3)"/><rect x="138" width="3" height="266" fill="url(#pm5)"/><rect x="141" width="2" height="266" fill="url(#pm2)"/><rect x="143" width="1" height="266" fill="url(#pm3)"/><rect x="144" width="3" height="266" fill="url(#pm0)"/><rect x="147" width="2" height="266" fill="url(#pm3)"/><rect x="149" width="3" height="266" fill="url(#pm2)"/><rect x="152" width="3" height="266" fill="url(#pm5)"/><rect x="155" width="1" height="266" fill="url(#pm4)"/><rect x="156" width="2" height="266" fill="url(#pm5)"/><rect x="158" width="1" height="266" fill="url(#pm8)"/><rect x="159" width="1" height="266" fill="url(#pm9)"/><rect x="160" width="1" height="266" fill="url(#pm3)"/><rect x="161" width="1" height="266" fill="url(#pm5)"/><rect x="162" width="1" height="266" fill="url(#pm4)"/><rect x="163" width="1" height="266" fill="url(#pm5)"/><rect x="164" width="1" height="266" fill="url(#pm0)"/><rect x="165" width="3" height="266" fill="url(#pm6)"/><rect x="168" width="1" height="266" fill="url(#pm7)"/><rect x="169" width="3" height="266" fill="url(#pm1)"/><rect x="172" width="1" height="266" fill="url(#pm3)"/><rect x="173" width="3" height="266" fill="url(#pm9)"/><rect x="176" width="2" height="266" fill="url(#pm6)"/><rect x="178" width="1" height="266" fill="url(#pm5)"/><rect x="179" width="1" height="266" fill="url(#pm0)"/><rect x="180" width="2" height="266" fill="url(#pm6)"/><rect x="182" width="3" height="266" fill="url(#pm2)"/><rect x="185" width="1" height="266" fill="url(#pm5)"/><rect x="186" width="3" height="266" fill="url(#pm5)"/><rect x="189" width="1" height="266" fill="url(#pm5)"/><rect x="190" width="1" height="266" fill="url(#pm4)"/><rect x="191" width="1" height="266" fill="url(#pm8)"/><rect x="192" width="1" height="266" fill="url(#pm0)"/><rect x="193" width="2" height="266" fill="url(#pm1)"/><rect x="195" width="2" height="266" fill="url(#pm0)"/><rect x="197" width="1" height="266" fill="url(#pm3)"/><rect x="198" width="1" height="266" fill="url(#pm2)"/><rect x="199" width="1" height="266" fill="url(#pm5)"/><rect x="200" width="1" height="266" fill="url(#pm4)"/><rect x="201" width="2" height="266" fill="url(#pm1)"/><rect x="203" width="1" height="266" fill="url(#pm0)"/><rect x="204" width="2" height="266" fill="url(#pm3)"/><rect x="206" width="1" height="266" fill="url(#pm1)"/><rect x="207" width="2" height="266" fill="url(#pm2)"/><rect x="209" width="1" height="266" fill="url(#pm4)"/><rect x="210" width="3" height="266" fill="url(#pm6)"/><rect x="213" width="2" height="266" fill="url(#pm2)"/><rect x="215" width="1" height="266" fill="url(#pm3)"/><rect x="216" width="1" height="266" fill="url(#pm2)"/><rect x="217" width="1" height="266" fill="url(#pm3)"/><rect x="218" width="1" height="266" fill="url(#pm9)"/><rect x="219" width="2" height="266" fill="url(#pm4)"/><rect x="221" width="1" height="266" fill="url(#pm1)"/><rect x="222" width="2" height="266" fill="url(#pm0)"/><rect x="224" width="1" height="266" fill="url(#pm5)"/><rect x="225" width="3" height="266" fill="url(#pm8)"/><rect x="228" width="3" height="266" fill="url(#pm1)"/><rect x="231" width="1" height="266" fill="url(#pm4)"/><rect x="232" width="1" height="266" fill="url(#pm4)"/><rect x="233" width="1" height="266" fill="url(#pm1)"/><rect x="234" width="3" height="266" fill="url(#pm2)"/><rect x="237" width="2" height="266" fill="url(#pm3)"/><rect x="239" width="1" height="266" fill="url(#pm6)"/><rect x="240" width="2" height="266" fill="url(#pm4)"/><rect x="242" width="1" height="266" fill="url(#pm4)"/><rect x="243" width="1" height="266" fill="url(#pm4)"/><rect x="244" width="2" height="266" fill="url(#pm6)"/><rect x="246" width="1" height="266" fill="url(#pm4)"/><rect x="247" width="1" height="266" fill="url(#pm1)"/><rect x="248" width="1" height="266" fill="url(#pm0)"/><rect x="249" width="3" height="266" fill="url(#pm5)"/><rect x="252" width="2" height="266" fill="url(#pm8)"/><rect x="254" width="1" height="266" fill="url(#pm6)"/><rect x="255" width="2" height="266" fill="url(#pm5)"/><rect x="257" width="1" height="266" fill="url(#pm4)"/><rect x="258" width="1" height="266" fill="url(#pm4)"/><rect x="259" width="3" height="266" fill="url(#pm5)"/><rect x="262" width="1" height="266" fill="url(#pm4)"/><rect x="263" width="1" height="266" fill="url(#pm0)"/><rect x="264" width="3" height="266" fill="url(#pm4)"/><rect x="267" width="2" height="266" fill="url(#pm0)"/><rect x="269" width="1" height="266" fill="url(#pm5)"/><rect x="270" width="1" height="266" fill="url(#pm6)"/><rect x="271" width="1" height="266" fill="url(#pm3)"/><rect x="272" width="1" height="266" fill="url(#pm0)"/><rect x="273" width="1" height="266" fill="url(#pm6)"/><rect x="274" width="2" height="266" fill="url(#pm7)"/><rect x="276" width="2" height="266" fill="url(#pm2)"/><rect x="278" width="3" height="266" fill="url(#pm1)"/><rect x="281" width="3" height="266" fill="url(#pm0)"/><rect x="284" width="1" height="266" fill="url(#pm0)"/><rect x="285" width="2" height="266" fill="url(#pm3)"/><rect x="287" width="1" height="266" fill="url(#pm5)"/><rect x="288" width="2" height="266" fill="url(#pm2)"/><rect x="290" width="2" height="266" fill="url(#pm7)"/><rect x="292" width="1" height="266" fill="url(#pm9)"/><rect x="293" width="1" height="266" fill="url(#pm0)"/><rect x="294" width="1" height="266" fill="url(#pm5)"/><rect x="295" width="2" height="266" fill="url(#pm0)"/><rect x="297" width="1" height="266" fill="url(#pm5)"/><rect x="298" width="1" height="266" fill="url(#pm0)"/><rect x="299" width="1" height="266" fill="url(#pm2)"/><rect x="300" width="1" height="266" fill="url(#pm1)"/><rect x="301" width="2" height="266" fill="url(#pm1)"/><rect x="303" width="1" height="266" fill="url(#pm9)"/><rect x="304" width="1" height="266" fill="url(#pm5)"/><rect x="305" width="2" height="266" fill="url(#pm6)"/><rect x="307" width="2" height="266" fill="url(#pm2)"/><rect x="309" width="1" height="266" fill="url(#pm3)"/><rect x="310" width="3" height="266" fill="url(#pm3)"/><rect x="313" width="1" height="266" fill="url(#pm6)"/><rect x="314" width="1" height="266" fill="url(#pm3)"/><rect x="315" width="2" height="266" fill="url(#pm2)"/><rect x="317" width="1" height="266" fill="url(#pm7)"/><rect x="318" width="1" height="266" fill="url(#pm6)"/><rect x="319" width="1" height="266" fill="url(#pm9)"/><rect x="320" width="1" height="266" fill="url(#pm8)"/><rect x="321" width="1" height="266" fill="url(#pm1)"/><rect x="322" width="1" height="266" fill="url(#pm4)"/><rect x="323" width="2" height="266" fill="url(#pm5)"/><rect x="325" width="1" height="266" fill="url(#pm6)"/><rect x="326" width="1" height="266" fill="url(#pm5)"/><rect x="327" width="1" height="266" fill="url(#pm6)"/><rect x="328" width="1" height="266" fill="url(#pm7)"/><rect x="329" width="2" height="266" fill="url(#pm9)"/><rect x="331" width="1" height="266" fill="url(#pm3)"/><rect x="332" width="1" height="266" fill="url(#pm6)"/><rect x="333" width="2" height="266" fill="url(#pm4)"/><rect x="335" width="1" height="266" fill="url(#pm1)"/><rect x="336" width="1" height="266" fill="url(#pm4)"/><rect x="337" width="1" height="266" fill="url(#pm6)"/><rect x="338" width="1" height="266" fill="url(#pm8)"/><rect x="339" width="1" height="266" fill="url(#pm4)"/><rect x="340" width="2" height="266" fill="url(#pm3)"/><rect x="342" width="1" height="266" fill="url(#pm2)"/><rect x="343" width="1" height="266" fill="url(#pm4)"/><rect x="344" width="2" height="266" fill="url(#pm5)"/><rect x="346" width="3" height="266" fill="url(#pm5)"/><rect x="349" width="2" height="266" fill="url(#pm2)"/><rect x="351" width="1" height="266" fill="url(#pm5)"/><rect x="352" width="1" height="266" fill="url(#pm7)"/><rect x="353" width="1" height="266" fill="url(#pm4)"/><rect x="354" width="1" height="266" fill="url(#pm3)"/><rect x="355" width="3" height="266" fill="url(#pm4)"/><rect x="358" width="2" height="266" fill="url(#pm3)"/><rect x="360" width="1" height="266" fill="url(#pm3)"/><rect x="361" width="2" height="266" fill="url(#pm8)"/><rect x="363" width="1" height="266" fill="url(#pm8)"/><rect x="364" width="1" height="266" fill="url(#pm6)"/><rect x="365" width="1" height="266" fill="url(#pm4)"/><rect x="366" width="2" height="266" fill="url(#pm3)"/><rect x="368" width="3" height="266" fill="url(#pm1)"/><rect x="371" width="1" height="266" fill="url(#pm8)"/><rect x="372" width="1" height="266" fill="url(#pm3)"/><rect x="373" width="2" height="266" fill="url(#pm5)"/><rect x="375" width="1" height="266" fill="url(#pm4)"/><rect x="376" width="1" height="266" fill="url(#pm3)"/><rect x="377" width="2" height="266" fill="url(#pm0)"/><rect x="379" width="1" height="266" fill="url(#pm5)"/><rect x="380" width="3" height="266" fill="url(#pm7)"/><rect x="383" width="2" height="266" fill="url(#pm8)"/><rect x="385" width="1" height="266" fill="url(#pm8)"/><rect x="386" width="2" height="266" fill="url(#pm6)"/><rect x="388" width="1" height="266" fill="url(#pm5)"/><rect x="389" width="1" height="266" fill="url(#pm3)"/><rect x="390" width="1" height="266" fill="url(#pm4)"/><rect x="391" width="2" height="266" fill="url(#pm0)"/><rect x="393" width="1" height="266" fill="url(#pm3)"/><rect x="394" width="1" height="266" fill="url(#pm1)"/><rect x="395" width="1" height="266" fill="url(#pm7)"/><rect x="396" width="1" height="266" fill="url(#pm1)"/><rect x="397" width="1" height="266" fill="url(#pm3)"/><rect x="398" width="2" height="266" fill="url(#pm6)"/><rect x="400" width="2" height="266" fill="url(#pm8)"/><rect x="402" width="1" height="266" fill="url(#pm6)"/><rect x="403" width="2" height="266" fill="url(#pm1)"/><rect x="405" width="2" height="266" fill="url(#pm0)"/><rect x="407" width="1" height="266" fill="url(#pm1)"/><rect x="408" width="1" height="266" fill="url(#pm2)"/><rect x="409" width="1" height="266" fill="url(#pm8)"/><rect x="410" width="1" height="266" fill="url(#pm6)"/><rect x="411" width="2" height="266" fill="url(#pm4)"/><rect x="413" width="3" height="266" fill="url(#pm3)"/><rect x="416" width="1" height="266" fill="url(#pm1)"/><rect x="417" width="2" height="266" fill="url(#pm0)"/><rect x="419" width="1" height="266" fill="url(#pm0)"/><rect x="420" width="2" height="266" fill="url(#pm0)"/><rect x="422" width="2" height="266" fill="url(#pm0)"/><rect x="424" width="3" height="266" fill="url(#pm0)"/><rect x="427" width="2" height="266" fill="url(#pm3)"/><rect x="429" width="2" height="266" fill="url(#pm3)"/><rect x="431" width="3" height="266" fill="url(#pm0)"/><rect x="434" width="1" height="266" fill="url(#pm1)"/><rect x="435" width="1" height="266" fill="url(#pm4)"/><rect x="436" width="1" height="266" fill="url(#pm5)"/><rect x="437" width="2" height="266" fill="url(#pm8)"/><rect x="439" width="1" height="266" fill="url(#pm5)"/><rect x="440" width="1" height="266" fill="url(#pm9)"/><rect x="441" width="1" height="266" fill="url(#pm9)"/><rect x="442" width="2" height="266" fill="url(#pm7)"/><rect x="444" width="1" height="266" fill="url(#pm5)"/><rect x="445" width="3" height="266" fill="url(#pm1)"/><rect x="448" width="2" height="266" fill="url(#pm0)"/><rect x="450" width="3" height="266" fill="url(#pm4)"/><rect x="453" width="1" height="266" fill="url(#pm7)"/><rect x="454" width="1" height="266" fill="url(#pm9)"/><rect x="455" width="2" height="266" fill="url(#pm3)"/><rect x="457" width="2" height="266" fill="url(#pm3)"/><rect x="459" width="3" height="266" fill="url(#pm8)"/><rect x="462" width="1" height="266" fill="url(#pm3)"/><rect x="463" width="2" height="266" fill="url(#pm9)"/><rect x="465" width="1" height="266" fill="url(#pm0)"/><rect x="466" width="1" height="266" fill="url(#pm3)"/><rect x="467" width="1" height="266" fill="url(#pm1)"/><rect x="468" width="1" height="266" fill="url(#pm0)"/><rect x="469" width="3" height="266" fill="url(#pm2)"/><rect x="472" width="2" height="266" fill="url(#pm3)"/><rect x="474" width="1" height="266" fill="url(#pm2)"/><rect x="475" width="1" height="266" fill="url(#pm1)"/><rect x="476" width="2" height="266" fill="url(#pm0)"/></g></mask></defs><rect width="478" height="266" filter="url(#cmA)"/><g mask="url(#sm)"><g filter="url(#cmB1)"><rect width="478" height="266" fill="url(#sc)"/></g></g><g mask="url(#b2m)"><g filter="url(#cmB)"><rect width="478" height="266" fill="url(#sc)"/><g filter="url(#bl7)"><ellipse cx="70" cy="212" rx="95" ry="10" fill="rgb(51,51,51)"/><ellipse cx="190" cy="206" rx="50" ry="6" fill="rgb(55,55,55)"/><ellipse cx="300" cy="199" rx="70" ry="7" fill="rgb(85,85,85)" opacity=".8"/><ellipse cx="441" cy="248" rx="55" ry="9" fill="rgb(82,82,82)" opacity=".8"/><ellipse cx="240" cy="238" rx="60" ry="6" fill="rgb(64,64,64)"/><ellipse cx="390" cy="216" rx="60" ry="7" fill="rgb(62,62,62)"/></g></g></g><path d="M128.5 45v97M444.5 41v34M111.5 16v86M6.5 38v36M142.5 48v89M240.5 41v34M201.5 62v65M440.5 47v93M330.5 49v71M110.5 2v84M211.5 65v88M221.5 73v56M417.5 60v92M75.5 24v43M427.5 78v100M110.5 31v43M71.5 38v50M341.5 51v84M388.5 37v35M195.5 3v59M76.5 16v31M424.5 40v52M234.5 11v47M471.5 29v73M7.5 15v60M136.5 11v76M171.5 62v41M265.5 72v92M285.5 7v38M329.5 32v51" stroke="#7d7d7d" stroke-width="1" opacity=".8"/><rect y="264" width="478" height="2" fill="#50e018"/><path d="M174.5 24V38M167 31.500H182" stroke="#fff" stroke-width="1"/><path d="M174.5 26V36M169 31.500H180" stroke="#222" stroke-width=".5"/></svg>
<div style="left:1299px;top:182px;width:20px;height:150px;background:#e070c0"></div><svg style="left:1300px;top:182px" width="18" height="150" viewBox="0 0 18 150"><rect y="5" width="18" height="138" fill="url(#cb1)"/><rect y="1" width="18" height="3.6" fill="#000"/><rect y="4.6" width="18" height="1" fill="#e070c0"/><rect y="142" width="18" height="2.4" fill="#fff"/><rect y="144.400" width="18" height="4.6" fill="#000"/></svg><div style="left:1321px;top:189px;width:5px;height:1px;background:#000"></div><div class="axb" style="left:1327px;top:183px;font-size:12px">-3.0</div><div style="left:1321px;top:257px;width:5px;height:1px;background:#000"></div><div class="axb" style="left:1327px;top:251px;font-size:12px">-5.5</div><div style="left:1321px;top:326px;width:5px;height:1px;background:#000"></div><div class="axb" style="left:1327px;top:320px;font-size:12px">-8.0</div><div class="axb" style="left:1314px;top:249px;width:100px;text-align:center;font-size:12px;transform:rotate(90deg)">log B (/m/sr)</div>
<div style="left:1299px;top:508px;width:20px;height:150px;background:#000"></div><svg style="left:1300px;top:508px" width="18" height="150" viewBox="0 0 18 150"><rect y="5" width="18" height="138" fill="url(#cb1)"/><rect y="1" width="18" height="3.6" fill="#f020e8"/><rect y="4.6" width="18" height="1" fill="#000"/><rect y="142" width="18" height="2.4" fill="#fff"/><rect y="144.400" width="18" height="4.6" fill="#000"/></svg><div style="left:1321px;top:514px;width:5px;height:1px;background:#000"></div><div class="axb" style="left:1327px;top:508px;font-size:12px">4.0</div><div style="left:1321px;top:583px;width:5px;height:1px;background:#000"></div><div class="axb" style="left:1327px;top:577px;font-size:12px">0.0</div><div style="left:1321px;top:652px;width:5px;height:1px;background:#000"></div><div class="axb" style="left:1327px;top:646px;font-size:12px">-4.0</div><div class="axb" style="left:1314px;top:575px;width:100px;text-align:center;font-size:12px;transform:rotate(90deg)">Velocity (m/s)</div>
<div class="t" style="left:898px;top:491px;font-size:11px;color:#000;font-weight:bold;line-height:14px;">Average number</div>
<div style="left:989px;top:486px;width:28px;height:20px;background:#8c7c5e;box-shadow:inset 2px 2px 1px #6f6148,inset -2px -2px 1px #b9aa88"></div>
<div style="left:991px;top:489px;width:23px;height:15px;background:#d9d9d9"></div>
<div class="t" style="left:994px;top:490px;font-size:11.5px;color:#000;font-weight:bold;line-height:14px;">1</div>
<div style="left:1037px;top:486px;width:28px;height:20px;background:#8c7c5e;box-shadow:inset 2px 2px 1px #6f6148,inset -2px -2px 1px #b9aa88"></div>
<div style="left:1039px;top:489px;width:23px;height:15px;background:#d9d9d9"></div>
<div class="t" style="left:1042px;top:490px;font-size:11.5px;color:#000;font-weight:bold;line-height:14px;">1</div>
<div class="t" style="left:1021px;top:489px;font-size:11.5px;color:#000;font-weight:bold;line-height:14px;">of</div>
<div class="t" style="left:1167px;top:488px;font-size:11.5px;color:#000;font-weight:bold;line-height:14px;">Backscatter</div>
<div style="left:1247px;top:490px;width:25px;height:11px;border-radius:6px;background:linear-gradient(#555,#222 50%,#666);box-shadow:1px 3px 3px #5f5238"></div><div style="left:1247px;top:490px;width:11px;height:11px;border-radius:50%;background:radial-gradient(circle at 40% 35%,#fff,#bbb 60%,#888)"></div>
<div style="left:258px;top:932px;width:1441px;height:41px;background:linear-gradient(to right,#8096b4 0%,#8398b6 3.600%,#a6bedc 4.600%,#a9c1df 20%,#abc3e0 70%,#8fa5c4 80%,#8298b8 100%);border-top:1px solid #e8eef6;box-shadow:inset 0 -1px 0 #5d7aa6"></div>
<svg style="left:267px;top:934px" width="36" height="36" viewBox="-50 -50 100 100"><defs><radialGradient id="og285" cx=".5" cy=".85" r=".9"><stop offset="0" stop-color="#2fd2ff"/><stop offset=".35" stop-color="#1173c4"/><stop offset=".75" stop-color="#0d3f86"/><stop offset="1" stop-color="#86a6cc"/></radialGradient></defs><circle r="49" fill="url(#og285)" stroke="#1b355f" stroke-width="2"/><path d="M-44 -8 A46 46 0 0 1 44 -8 Q0 -22 -44 -8Z" fill="#fff" opacity=".35"/><path d="M-22 -20 Q-10 -30 -2 -24 L-6 -3 Q-16 -8 -27 -1Z" fill="#f0642a"/><path d="M2 -22 Q12 -14 25 -22 L20 0 Q10 6 -2 -1Z" fill="#8cc63f"/><path d="M-28 4 Q-16 -4 -7 2 L-11 24 Q-22 18 -33 25Z" fill="#2f9de0"/><path d="M-3 4 Q8 12 19 5 L14 27 Q4 33 -7 26Z" fill="#fcc82d"/></svg>
<div style="left:318px;top:933px;width:54px;height:39px;border:1px solid #6f87ad;border-radius:2px;background:linear-gradient(#d7e3f2 0%,#c3d5ea 45%,#aec5e0 50%,#bdd0e8 100%);box-shadow:inset 0 0 0 1px rgba(255,255,255,.6)"></div>
<div style="left:373px;top:935px;width:3px;height:36px;border:1px solid #8aa0c2;border-left:none"></div>
<div style="left:442px;top:933px;width:58px;height:39px;border:1px solid #6f87ad;border-radius:2px;background:linear-gradient(#d7e3f2 0%,#c3d5ea 45%,#aec5e0 50%,#bdd0e8 100%);box-shadow:inset 0 0 0 1px rgba(255,255,255,.6)"></div>
<div style="left:504px;top:933px;width:58px;height:39px;border:1px solid #6f87ad;border-radius:2px;background:linear-gradient(#d7e3f2 0%,#c3d5ea 45%,#aec5e0 50%,#bdd0e8 100%);box-shadow:inset 0 0 0 1px rgba(255,255,255,.6)"></div>
<div style="left:566px;top:933px;width:58px;height:39px;border:1px solid #6f87ad;border-radius:2px;background:linear-gradient(#d7e3f2 0%,#c3d5ea 45%,#aec5e0 50%,#bdd0e8 100%);box-shadow:inset 0 0 0 1px rgba(255,255,255,.6)"></div>
<div style="left:628px;top:933px;width:54px;height:39px;border:1px solid #6f87ad;border-radius:2px;background:linear-gradient(#d7e3f2 0%,#c3d5ea 45%,#aec5e0 50%,#bdd0e8 100%);box-shadow:inset 0 0 0 1px rgba(255,255,255,.6)"></div>
<div style="left:683px;top:935px;width:3px;height:36px;border:1px solid #8aa0c2;border-left:none"></div>
<div style="left:690px;top:933px;width:58px;height:39px;border:1px solid #6f87ad;border-radius:2px;background:linear-gradient(#d7e3f2 0%,#c3d5ea 45%,#aec5e0 50%,#bdd0e8 100%);box-shadow:inset 0 0 0 1px rgba(255,255,255,.6)"></div>
<svg style="left:328px;top:938px" width="34" height="30" viewBox="0 0 34 30"><path d="M9 3 L30 5 L24 27 L2 23Z" fill="#8fd0e6" stroke="#5f9db8" stroke-width=".8"/><path d="M11 5 L28 7 L23 24 L5 21Z" fill="#c8ecf6"/><path d="M30 5 L32 7 L26 28 L24 27Z" fill="#c9b27a"/><path d="M10 2 L30 4" stroke="#777" stroke-width="2" stroke-dasharray="1.500 1"/></svg>
<svg style="left:392px;top:939px" width="34" height="30" viewBox="0 0 34 30"><rect x="1" y="1" width="32" height="21" rx="2" fill="#3d8fe0" stroke="#2a6cb8"/><circle cx="9" cy="8" r="4.5" fill="#bfe0fa"/><path d="M9 8 L9 3.500 A4.500 4.500 0 0 1 13.500 8Z" fill="#f7a823"/><rect x="17" y="5" width="12" height="4" fill="#d6ecff"/><rect x="17" y="12" width="12" height="4" fill="#d6ecff"/><rect x="19" y="6" width="5" height="2" fill="#3d8fe0"/><rect x="22" y="13" width="5" height="2" fill="#3d8fe0"/><circle cx="8" cy="17" r="1.500" fill="#f7e26b"/><ellipse cx="17" cy="25" rx="7" ry="4" fill="#dcdcdc" stroke="#aaa" stroke-width=".6"/></svg>
<svg style="left:455px;top:938px" width="34" height="30" viewBox="0 0 34 30"><path d="M6 3 L22 6 L18 22 L2 18Z" fill="#a8d88a" opacity=".9"/><path d="M10 9 L24 8 L25 24 L11 25Z" fill="#bcdcf4" opacity=".8"/><path d="M16 8 L32 11 L27 28 L12 23Z" fill="#f4e06a"/></svg>
<div style="left:517px;top:937px;width:32px;height:32px;border-radius:6px;background:#ee1111;border:1px solid #7a0000"></div><svg style="left:517px;top:937px" width="32" height="32" viewBox="0 0 32 32"><circle cx="16" cy="16" r="10.500" fill="none" stroke="#fff" stroke-width="3"/><path d="M16 8.500V23.500" stroke="#fff" stroke-width="3.200"/></svg>
<div style="left:579px;top:936px;width:32px;height:32px;background:#e8e8e8;border:1px solid #000"></div><div class="t" style="left:594px;top:934px;font-size:11px;color:#1a1a8a;line-height:13px;">XR</div><svg style="left:585px;top:949px" width="22" height="20" viewBox="0 0 22 20"><path d="M12 2 H16 V6 H18 V18 H14 V13 H6 V18 H2 V8 H12Z" fill="#fff" stroke="#000" stroke-width="1.200"/><path d="M4 9 L9 12 L13 8" stroke="#c11" stroke-width="1.600" fill="none"/></svg>
<svg style="left:638px;top:937px" width="34" height="32" viewBox="0 0 40 38"><path d="M2 6 L14 4 L17 7 L38 7 L38 34 L2 34Z" fill="#e9c868" stroke="#c19a36" stroke-width=".8"/><rect x="4" y="9" width="33" height="22" fill="#fbf1c0"/><path d="M2 13 L38 11 L38 35 L2 35Z" fill="#f3dc86" stroke="#c8a545" stroke-width=".6"/><path d="M7 23 H33 V36 H27 V29 H13 V36 H7Z" fill="#64b8ea" stroke="#3c8fc7" stroke-width=".8" opacity=".95"/><rect x="6" y="5" width="3" height="2" fill="#3a9a3a"/><rect x="14" y="8" width="3" height="2" fill="#d33"/><rect x="26" y="9" width="3" height="2" fill="#36c"/></svg>
<div style="left:701px;top:939px;width:30px;height:24px;background:#000;border-top:3px solid #777;box-shadow:1px 1px 2px #556"></div><div class="t" style="left:704px;top:943px;font-size:7px;color:#fff;font-weight:bold;line-height:9px;">C:\_</div>
<svg style="left:1533px;top:948px" width="12" height="10" viewBox="0 0 12 10"><path d="M2 7 L6 3 L10 7Z" fill="#fff"/></svg>
<svg style="left:1554px;top:943px" width="20" height="20" viewBox="0 0 20 20"><path d="M2 7.500 H5 L9 3.500 V16.500 L5 12.500 H2Z" fill="#fff" stroke="#667" stroke-width=".5"/><path d="M11.500 7 Q13.500 10 11.500 13 M13.800 5 Q17 10 13.800 15" stroke="#fff" stroke-width="1.300" fill="none"/></svg>
<svg style="left:1578px;top:943px" width="20" height="20" viewBox="0 0 20 20"><path d="M4 3V17" stroke="#fff" stroke-width="1.600"/><path d="M5 4 Q8 2.500 10.500 4.500 T16 5 L16 11 Q13 12.500 10.500 10.500 T5 10.500Z" fill="#fff" stroke="#667" stroke-width=".4"/></svg>
<div class="t" style="left:1603px;top:937px;font-size:11.5px;color:#fff;width:80px;text-align:center;line-height:15px;text-shadow:0 0 2px #345">05:30</div>
<div class="t" style="left:1603px;top:954px;font-size:11.5px;color:#fff;width:80px;text-align:center;line-height:15px;text-shadow:0 0 2px #345">05/08/2023</div>
<div style="left:1684px;top:933px;width:14px;height:40px;border:1px solid #5a6f90;background:linear-gradient(to right,#9aa8bc,#6f7f98)"></div>
<div style="left:1448px;top:718px;width:249px;height:214px;background:#fff"></div>
<div style="left:1448px;top:718px;width:249px;height:103px;background:#0064c8"></div>
<div style="left:1448px;top:904px;width:249px;height:28px;background:#404040"></div>
<div style="left:1456px;top:726px;width:40px;height:40px;background:#1e96f0;border-radius:2px"></div><svg style="left:1456px;top:726px" width="40" height="40" viewBox="0 0 40 40"><circle cx="20" cy="20" r="15.500" fill="#fff"/><path d="M7.500 20 L14.500 15 V18.200 H25.500 V15 L32.500 20 L25.500 25 V21.800 H14.500 V25Z" fill="#1464d2"/></svg>
<div class="t" style="left:1511px;top:729px;font-size:22.4px;color:#fff;line-height:26px;letter-spacing:0px"><b>Team</b>Viewer</div>
<div class="t" style="left:1504px;top:753px;font-size:11px;color:#e8f2ff;line-height:14px;">Free license (personal use</div>
<div class="t" style="left:1504px;top:767px;font-size:11px;color:#e8f2ff;line-height:14px;">only) - Already have an accou...</div>
<svg style="left:1668px;top:742px" width="13" height="13" viewBox="0 0 13 13"><path d="M1.500 1.500 L11.500 11.500 M11.500 1.500 L1.500 11.500" stroke="#fff" stroke-width="2.400"/></svg>
<svg style="left:1461px;top:797px" width="16" height="17" viewBox="0 0 16 17"><rect x="1" y="1" width="9" height="11" fill="none" stroke="#fff" stroke-width="1.400"/><rect x="4.500" y="4.500" width="10" height="11.500" fill="#fff"/><path d="M6.500 7.500H12.500M6.500 10H12.500M6.500 12.500H12.500" stroke="#0064c8" stroke-width="1"/></svg>
<svg style="left:1494px;top:796px" width="18" height="18" viewBox="0 0 18 18"><path d="M15 1.500 L16.500 3 L10.500 9.500 L8.500 7.500Z" fill="#fff"/><path d="M8 8 L10 10 L5 17 L1 13Z" fill="#fff"/><path d="M3 12 L6 15" stroke="#0064c8" stroke-width=".8"/></svg>
<svg style="left:1529px;top:799px" width="14" height="13" viewBox="0 0 14 13"><path d="M6.500 1.500 L2 6.500 L6.500 11.500 M12 1.500 L7.500 6.500 L12 11.500" stroke="#fff" stroke-width="1.600" fill="none"/></svg>
<svg style="left:1453px;top:830px" width="10" height="9" viewBox="0 0 10 9"><path d="M.5 1.500 H9.500 L5 8Z" fill="#4a5a6a"/></svg>
<div class="t" style="left:1468px;top:827px;font-size:13.5px;color:#222;line-height:16px;">Session list</div>
<svg style="left:1674px;top:828px" width="18" height="13" viewBox="0 0 18 13"><circle cx="6" cy="6.500" r="3.200" fill="none" stroke="#6a7888" stroke-width="2.200" stroke-dasharray="1.700 1.200"/><circle cx="6" cy="6.500" r="2.300" fill="none" stroke="#6a7888" stroke-width="1.300"/><path d="M12.500 5.500 H17 L14.750 8Z" fill="#6a7888"/></svg>
<div style="left:1423px;top:830px;width:25px;height:50px;background:#fff;clip-path:polygon(8% 0,100% 0,100% 100%,0 72%,0 8%)"></div>
<svg style="left:1431px;top:839px" width="8" height="12" viewBox="0 0 8 12"><path d="M1.500 1.500 L6 6 L1.500 10.500" stroke="#4a5a6a" stroke-width="1.400" fill="none"/></svg>
<div style="left:1455px;top:862px;width:18px;height:18px;background:#e8ebee;border:1px solid #8a96a4"></div><svg style="left:1455px;top:862px" width="18" height="18" viewBox="0 0 18 18"><circle cx="9" cy="7" r="3.200" fill="#7e8a99"/><path d="M3 16.500 Q3 11 9 11 Q15 11 15 16.500Z" fill="#7e8a99"/></svg>
<div class="t" style="left:1477px;top:864px;width:147px;overflow:hidden;font-size:10.2px;color:#222;line-height:14px">DESKTOP-OE0QDVI (1 817 937 200)</div>
<svg style="left:1633px;top:866px" width="12" height="9" viewBox="0 0 12 9"><path d="M1 1 H11 L6 8Z" fill="#333"/></svg>
<svg style="left:1654px;top:864px" width="13" height="14" viewBox="0 0 13 14"><path d="M1 1 L12 5.500 L7.500 7 L11 12 L9 13 L6 8.500 L3 11.500Z" fill="#2b8cf0"/></svg>
<div class="t" style="left:1560px;top:909px;font-size:12px;color:#fff;width:128px;text-align:right;line-height:14px;text-decoration:underline">www.teamviewer.com</div>
</body></html>
